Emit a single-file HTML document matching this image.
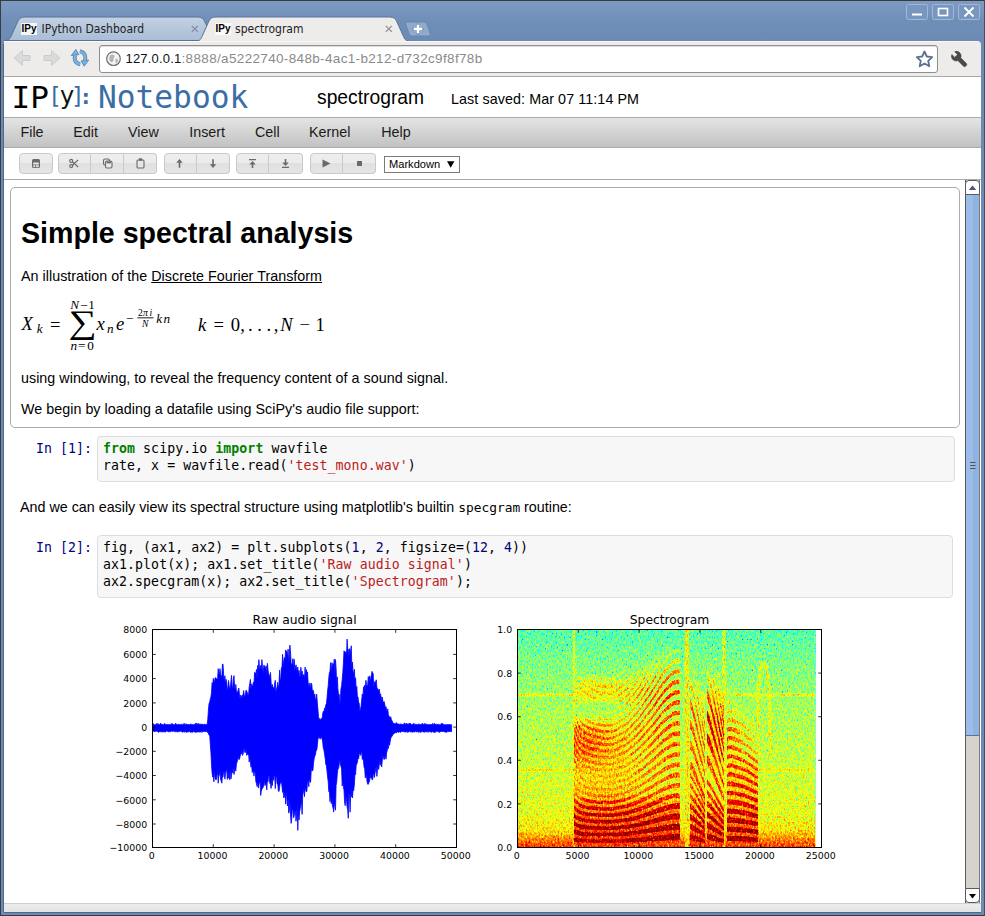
<!DOCTYPE html>
<html lang="en"><head><meta charset="utf-8"><title>spectrogram</title>
<style>
*{box-sizing:border-box;margin:0;padding:0}
html,body{width:985px;height:916px;overflow:hidden;background:#6d8cb6}
body{position:relative;font-family:"Liberation Sans",sans-serif;color:#000}
.abs{position:absolute}
#frame{position:absolute;left:0;top:0;width:985px;height:916px;background:linear-gradient(#7e9cc2 0px,#6f8eb8 20px,#6b8ab4 41px,#6b8ab4 100%);border:1px solid #3b3b3b;border-right-color:#3f4f6a}
#toolbar{position:absolute;left:4px;top:41px;width:977px;height:36px;border-radius:0 4px 0 0;background:#edecea;border-bottom:1px solid #a9a9a9;border-top:1px solid #f8f8f8}
#page{position:absolute;left:4px;top:77px;width:977px;height:826px;background:#fff;overflow:hidden}
#lshade{position:absolute;left:3px;top:44px;width:1px;height:868px;background:#4d668c}
#bstrip{position:absolute;left:4px;top:903px;width:977px;height:9.500px;background:linear-gradient(#ececec,#e4e4e4);border-top:1px solid #cfcfcf;border-bottom:1px solid #4d668c}
.tabtxt{position:absolute;font-family:"DejaVu Sans Condensed","Liberation Sans",sans-serif;font-size:12px;line-height:15px;color:#222;white-space:pre}
.ipy{position:absolute;font-family:"Liberation Sans",sans-serif;font-weight:bold;font-size:10px;color:#000;background:#f4f6f9;line-height:12px;height:12px;width:16px;text-align:center}
#url{position:absolute;left:99px;top:45px;width:838.500px;height:28px;background:#fff;border:1px solid #8e8e8e;border-radius:3px;box-shadow:inset 0 1px 1px #ddd}
#urltxt{position:absolute;left:125.500px;top:50.500px;font-size:13.500px;line-height:16px;color:#8a8a8a;white-space:pre;letter-spacing:0.34px}
#urltxt b{font-weight:normal;color:#111;font-size:13px;letter-spacing:0.2px}
#menubar{position:absolute;left:0;top:40px;width:977px;height:31px;background:linear-gradient(#e4e4e4,#c2c2c2);border-top:1px solid #aaa;border-bottom:1px solid #aaa}
#menubar span{position:absolute;top:6px;font-size:14.3px;line-height:17px;color:#1a1a1a}
#tb{position:absolute;left:0;top:71px;width:977px;height:32px;background:#fff;border-bottom:1px solid #aaa}
.btn{position:absolute;top:5px;height:20.500px;background:linear-gradient(#eeeeee 0,#ebebeb 48%,#e0e0e0 49%,#e5e5e5 100%);border:1px solid #c9c9c9}
.bl{border-radius:4px 0 0 4px}.br{border-radius:0 4px 4px 0;border-left:none}.bm{border-left:none}.bs{border-radius:4px}
h1.x{}.md{font-size:14.3px;line-height:17px;white-space:pre;position:absolute;color:#000;letter-spacing:0.03px}
.code{font-family:"DejaVu Sans Mono","Liberation Mono",monospace;font-size:13.2px;line-height:17px;white-space:pre;position:absolute;color:#000;letter-spacing:0.08px}
.k{color:#008000;font-weight:bold}.s{color:#ba2121}.n{color:#000080}
.inbox{position:absolute;background:#f7f7f7;border:1px solid #ddd;border-radius:4px}
.prompt{color:#000080}
</style></head><body>
<div id="frame"></div>

<svg class="abs" style="left:0;top:0" width="985" height="42" viewBox="0 0 985 42">
 <defs>
  <linearGradient id="tabi" x1="0" y1="0" x2="0" y2="1"><stop offset="0" stop-color="#c3d1e3"/><stop offset="1" stop-color="#aabdd6"/></linearGradient>
 </defs>
 <path d="M4 40.500 C8.500 40.500 10 39 11.500 35.500 L17.500 22 C19 18.500 21 17 25 17 L197.500 17 C201.500 17 203.500 18.500 205 22 L211 35.500 C212.500 39 214 40.500 218.500 40.500 Z" fill="url(#tabi)" stroke="#5a7396" stroke-width="1"/>
 <path d="M194.500 41.500 C199 41.500 200.500 40 202 36.500 L208.500 22 C210 18.500 212 17 216 17 L389.500 17 C393.500 17 395.500 18.500 397 22 L403.500 36.500 C405 40 406.500 41.500 411 41.500 Z" fill="#edecea" stroke="#5a7396" stroke-width="1"/>
 <rect x="196" y="41" width="214.500" height="1.500" fill="#edecea"/>
 <!-- new tab button -->
 <path d="M407.500 22 L423.500 22 C425.500 22 426.300 22.800 427 24.500 L430 33 C430.800 35.300 430 36 428 36 L412.500 36 C410.500 36 409.700 35.200 409 33.500 L406 25 C405.200 22.700 405.500 22 407.500 22 Z" fill="#91aacb" stroke="#6482ab" stroke-width="0.800"/>
 <path d="M418 25 v8.600 M413.700 29.300 h8.600" stroke="#5f7ba3" stroke-width="3.400" stroke-linecap="round" opacity="0.45"/>
 <path d="M418 24.700 v8.600 M413.700 29 h8.600" stroke="#fff" stroke-width="2.400"/>
 <!-- close x -->
 <path d="M191.800 25.900 l6 6 m0 -6 l-6 6" stroke="#7d8ea6" stroke-width="1.300" fill="none"/>
 <path d="M385.800 25.900 l6 6 m0 -6 l-6 6" stroke="#8f8f8f" stroke-width="1.300" fill="none"/>
</svg>

<svg class="abs" style="left:900px;top:0" width="85" height="24" viewBox="0 0 85 24">
 <g fill="#7796c0" stroke="#a3b8d6" stroke-width="1">
  <rect x="6.500" y="4.500" width="21" height="15" rx="2"/>
  <rect x="32.500" y="4.500" width="21" height="15" rx="2"/>
  <rect x="58.500" y="4.500" width="21" height="15" rx="2"/>
 </g>
 <path d="M12 14.500 h10" stroke="#fff" stroke-width="2"/>
 <rect x="38.500" y="8.500" width="9" height="7" fill="none" stroke="#fff" stroke-width="1.600"/>
 <path d="M64.500 7.500 l9 9 m0 -9 l-9 9" stroke="#fff" stroke-width="1.800"/>
</svg>
<span class="ipy" style="left:21px;top:23px">IPy</span><span class="tabtxt" style="left:41.500px;top:21.500px">IPython Dashboard</span>
<span class="ipy" style="left:215px;top:23px;background:#fbfbfb">IPy</span><span class="tabtxt" style="left:235px;top:21.500px">spectrogram</span>
<div id="toolbar"></div>

<svg class="abs" style="left:4px;top:42px" width="100" height="34" viewBox="0 0 100 34">
 <!-- back -->
 <path d="M10 16 L18.500 8.500 L18.500 13.500 L26 13.500 L26 18.500 L18.500 18.500 L18.500 23.500 Z" fill="#dadada" stroke="#c6c6c6" stroke-width="0.800"/>
 <!-- forward -->
 <path d="M56 16 L47.500 8.500 L47.500 13.500 L40 13.500 L40 18.500 L47.500 18.500 L47.500 23.500 Z" fill="#dadada" stroke="#c6c6c6" stroke-width="0.800"/>
 <!-- reload -->
 <g transform="translate(76,15.800) scale(0.87)">
  <g id="rl">
   <path d="M0.200 7.400 C-6 6.600 -7.200 0.500 -5.400 -3.200" stroke="#4f7fb2" stroke-width="4.400" fill="none"/>
   <path d="M-10 -2.600 L-1.300 -3.600 L-4.800 -9.600 Z" fill="#7fb0e0" stroke="#4f7fb2" stroke-width="1" stroke-linejoin="round"/>
   <path d="M0.200 7.400 C-6 6.600 -7.200 0.500 -5.400 -3.200" stroke="#7fb0e0" stroke-width="2.800" fill="none"/>
  </g>
  <g transform="rotate(180)">
   <path d="M0.200 7.400 C-6 6.600 -7.200 0.500 -5.400 -3.200" stroke="#4f7fb2" stroke-width="4.400" fill="none"/>
   <path d="M-10 -2.600 L-1.300 -3.600 L-4.800 -9.600 Z" fill="#7fb0e0" stroke="#4f7fb2" stroke-width="1" stroke-linejoin="round"/>
   <path d="M0.200 7.400 C-6 6.600 -7.200 0.500 -5.400 -3.200" stroke="#7fb0e0" stroke-width="2.800" fill="none"/>
  </g>
 </g>
</svg>
<div id="url"></div>

<svg class="abs" style="left:100px;top:46px" width="880" height="26" viewBox="0 0 880 26">
 <circle cx="13.500" cy="12.700" r="6.800" fill="#f4f4f4" stroke="#6e6e6e" stroke-width="1.200"/>
 <path d="M10 9.500 c2 -1.500 4 -1 4.500 0.500 c0.500 1.500 -1.500 2 -1 3.500 c0.500 1.500 -1 3 -2.500 2.500 c-1.500 -0.500 -2.500 -4 -1 -6.500z M15.500 13 c1.500 -0.500 3 0.500 2.500 2 c-0.500 1.500 -2 2.500 -2.500 1.500z" fill="#b5b5b5"/>
 <!-- star -->
 <path d="M824.500 5.500 l2.300 5 5.400 0.600 -4 3.700 1.100 5.400 -4.800 -2.700 -4.800 2.700 1.100 -5.400 -4 -3.700 5.400 -0.600z" fill="#fff" stroke="#5b7091" stroke-width="1.800" stroke-linejoin="round"/>
 <!-- wrench -->
 <g transform="translate(859.300,13.200) rotate(-45)">
  <path d="M-2 -8.500 L-2 -4.500 L2 -4.500 L2 -8.500 C4.500 -7.500 5.500 -5 4.500 -2.500 C4 -1.200 3 -0.500 2 0 L2 8 C2 10 -2 10 -2 8 L-2 0 C-3 -0.500 -4 -1.200 -4.500 -2.500 C-5.500 -5 -4.500 -7.500 -2 -8.500 Z" fill="#4a4a4a" stroke="#333" stroke-width="0.500"/>
 </g>
</svg>
<div id="urltxt"><b>127.0.0.1</b>:8888/a5222740-848b-4ac1-b212-d732c9f8f78b</div>
<div id="lshade"></div>
<div id="bstrip"></div>
<div id="page">

<div class="abs" style="left:7.500px;top:2px;height:36px;white-space:pre;font-family:'DejaVu Sans Mono','Liberation Mono',monospace;font-size:31px;line-height:36px;color:#000">IP</div>
<div class="abs" style="left:47.200px;top:4.600px;white-space:pre;font-family:'DejaVu Sans','Liberation Sans',sans-serif;font-size:23px;line-height:28px;color:#3a6ea5">[<span style="color:#111;font-size:24px;margin-left:-0.200px">y</span><span style="margin-left:-1.600px">]</span><span style="margin-left:0.200px;font-weight:bold;font-size:20px">:</span></div>
<div class="abs" style="left:94px;top:2px;white-space:pre;font-family:'DejaVu Sans Mono','Liberation Mono',monospace;font-size:31.200px;line-height:36px;color:#3a6ea5">Notebook</div>

<div class="abs" style="left:313px;top:10px;font-size:19.300px;line-height:22px;white-space:pre">spectrogram</div>
<div class="abs" style="left:447px;top:14px;font-size:14.300px;line-height:17px;white-space:pre;letter-spacing:0.090px">Last saved: Mar 07 11:14 PM</div>
<div id="menubar"><span style="left:16.5px">File</span><span style="left:69.3px">Edit</span><span style="left:124px">View</span><span style="left:185.3px">Insert</span><span style="left:251px">Cell</span><span style="left:305px">Kernel</span><span style="left:377.3px">Help</span></div>
<div id="tb"><div class="btn bs" style="left:15px;width:33.5px"></div><div class="btn bl" style="left:53.5px;width:33.0px"></div><div class="btn bm" style="left:86.5px;width:33.5px"></div><div class="btn br" style="left:120px;width:32.5px"></div><div class="btn bl" style="left:159.5px;width:33.0px"></div><div class="btn br" style="left:192.5px;width:33.0px"></div><div class="btn bl" style="left:232px;width:33px"></div><div class="btn br" style="left:265px;width:33.5px"></div><div class="btn bl" style="left:305.5px;width:33.0px"></div><div class="btn br" style="left:338.5px;width:33.0px"></div><svg class="abs" style="left:0;top:0" width="480" height="32" viewBox="0 0 480 32"><g transform="translate(32,15.5)"><rect x="-4" y="-4.500" width="8" height="9" rx="1.500" fill="#6a6a6a"/><rect x="-2.800" y="-1" width="5.600" height="2" fill="#e8e8e8"/><rect x="-2.800" y="1.700" width="2" height="2" fill="#ddd"/><rect x="0" y="1.700" width="2.800" height="2" fill="#ddd"/></g><g transform="translate(70,15.5)"><g fill="none" stroke="#6a6a6a" stroke-width="1.200"><circle cx="-2.800" cy="-2.600" r="1.500"/><circle cx="-2.800" cy="2.600" r="1.500"/><path d="M-1.600 -1.800 L4.200 3.600 M-1.600 1.800 L4.200 -3.600"/></g></g><g transform="translate(103.5,15.5)"><rect x="-4" y="-4.500" width="6" height="6" rx="1.500" fill="#e6e6e6" stroke="#6a6a6a" stroke-width="1.100"/><rect x="-2" y="-2.500" width="6.500" height="7" rx="1.500" fill="#e6e6e6" stroke="#6a6a6a" stroke-width="1.100"/><rect x="-1" y="-2" width="4.500" height="1.800" fill="#6a6a6a"/></g><g transform="translate(136.5,15.5)"><rect x="-3.500" y="-3.500" width="7" height="8" rx="1" fill="#e6e6e6" stroke="#6a6a6a" stroke-width="1.100"/><rect x="-1.700" y="-5.200" width="3.400" height="2.400" rx="0.600" fill="#6a6a6a"/></g><g transform="translate(175.5,15.5)"><path d="M0 -4.500 L3.200 -0.800 L0.800 -0.800 L0.800 4.200 L-0.800 4.200 L-0.800 -0.800 L-3.200 -0.800 Z" fill="#6a6a6a"/></g><g transform="translate(209,15.5)"><path d="M0 4.500 L3.200 0.800 L0.800 0.800 L0.800 -4.200 L-0.800 -4.200 L-0.800 0.800 L-3.200 0.800 Z" fill="#6a6a6a"/></g><g transform="translate(248.5,15.5)"><path d="M-3.500 -4.500 H3.500 V-3.300 H-3.500 Z M0 -2.500 L3.200 1 L0.800 1 L0.800 4.500 L-0.800 4.500 L-0.800 1 L-3.200 1 Z" fill="#6a6a6a"/></g><g transform="translate(281.5,15.5)"><path d="M-3.500 4.500 H3.500 V3.300 H-3.500 Z M0 2.500 L3.200 -1 L0.800 -1 L0.800 -4.500 L-0.800 -4.500 L-0.800 -1 L-3.200 -1 Z" fill="#6a6a6a"/></g><g transform="translate(322,15.5)"><path d="M-3.500 -4 L4.500 0 L-3.500 4 Z" fill="#6a6a6a"/></g><g transform="translate(355.5,15.5)"><rect x="-2.500" y="-2.500" width="5" height="5" fill="#6a6a6a"/></g></svg><div class="abs" style="left:380px;top:7.5px;width:76px;height:17.500px;border:1px solid #7a7a7a;background:#fff"></div><div class="abs" style="left:385px;top:9px;font-size:11.100px;line-height:14px;white-space:pre">Markdown</div><svg class="abs" style="left:441.5px;top:11.5px" width="10" height="10"><path d="M1 1.200 L8.400 1.200 L4.700 7.700 Z" fill="#000"/></svg></div>
<div class="abs" style="left:6px;top:110.30000000000001px;width:950px;height:241px;border:1px solid #ababab;border-radius:5px"></div>
<div class="md" style="left:17px;top:138.5px;font-size:28.600px;line-height:34px;font-weight:bold;letter-spacing:0">Simple spectral analysis</div>
<div class="md" style="left:17px;top:191px;">An illustration of the <span style="text-decoration:underline">Discrete Fourier Transform</span></div>
<svg class="abs" style="left:11px;top:215px" width="320" height="70" viewBox="0 0 320 70" font-family="Liberation Serif, DejaVu Serif, serif" fill="#000"><text x="6.5" y="38.3" font-size="18.6" font-style="italic" >X</text><text x="21.8" y="41.4" font-size="13.2" font-style="italic" >k</text><text x="35.0" y="38.8" font-size="18.6"  >=</text><text transform="translate(53.6,41.0) scale(1.36,1.13)" x="0" y="0" font-size="29">∑</text><text x="55.3" y="17.3" font-size="13.2" font-style="italic" >N</text><text x="65.3" y="17.5" font-size="13.2"  >−</text><text x="73.3" y="17.3" font-size="13.2"  >1</text><text x="55.4" y="57.8" font-size="13.2" font-style="italic" >n</text><text x="63.0" y="58.0" font-size="13.2"  >=</text><text x="72.2" y="57.8" font-size="13.2"  >0</text><text x="81.5" y="38.3" font-size="18.6" font-style="italic" >x</text><text x="92.0" y="41.4" font-size="13.2" font-style="italic" >n</text><text x="101.0" y="38.3" font-size="18.6" font-style="italic" >e</text><text x="111.0" y="30.5" font-size="13.2"  >−</text><text x="123.0" y="24.3" font-size="9.6"  >2</text><text x="128.0" y="24.3" font-size="9.6" font-style="italic" >π</text><text x="134.6" y="24.3" font-size="9.6" font-style="italic" >i</text><rect x="122.5" y="25.399999999999977" width="16" height="0.9" fill="#000"/><text x="127.0" y="35.2" font-size="9.6" font-style="italic" >N</text><text x="141.3" y="30.7" font-size="13.2" font-style="italic" >k</text><text x="148.5" y="30.7" font-size="13.2" font-style="italic" >n</text><text x="183.0" y="38.5" font-size="18.6" font-style="italic" >k</text><text x="198.5" y="38.8" font-size="18.6"  >=</text><text x="215.8" y="38.5" font-size="18.6"  >0</text><text x="225.3" y="38.5" font-size="18.6"  >,</text><text x="233.0" y="38.5" font-size="18.6"  >.</text><text x="242.2" y="38.5" font-size="18.6"  >.</text><text x="251.4" y="38.5" font-size="18.6"  >.</text><text x="258.8" y="38.5" font-size="18.6"  >,</text><text x="265.3" y="38.5" font-size="18.6" font-style="italic" >N</text><text x="284.5" y="38.8" font-size="18.6"  >−</text><text x="300.5" y="38.5" font-size="18.6"  >1</text></svg>
<div class="md" style="left:17px;top:293px;">using windowing, to reveal the frequency content of a sound signal.</div>
<div class="md" style="left:17px;top:324px;">We begin by loading a datafile using SciPy's audio file support:</div>
<div class="inbox" style="left:93px;top:359px;width:858px;height:46px"></div>
<div class="code prompt" style="left:32px;top:363px;">In [1]:</div>
<div class="code" style="left:99px;top:363px;"><span class="k">from</span> scipy.io <span class="k">import</span> wavfile
rate, x = wavfile.read(<span class="s">'test_mono.wav'</span>)</div>
<div class="md" style="left:16px;top:422px;letter-spacing:0">And we can easily view its spectral structure using matplotlib's builtin <span style="font-family:'DejaVu Sans Mono','Liberation Mono',monospace;font-size:12.870px">specgram</span> routine:</div>
<div class="inbox" style="left:93px;top:458px;width:856px;height:63px"></div>
<div class="code prompt" style="left:32px;top:462px;">In [2]:</div>
<div class="code" style="left:99px;top:462px;">fig, (ax1, ax2) = plt.subplots(<span class="n">1</span>, <span class="n">2</span>, figsize=(<span class="n">12</span>, <span class="n">4</span>))
ax1.plot(x); ax1.set_title(<span class="s">'Raw audio signal'</span>)
ax2.specgram(x); ax2.set_title(<span class="s">'Spectrogram'</span>);</div>
<svg class="abs" style="left:96px;top:531px" width="760" height="262" viewBox="0 0 760 262" font-family="DejaVu Sans, Liberation Sans, sans-serif" font-size="9.4" fill="#000"><defs>
<linearGradient id="sbg" x1="0" y1="0" x2="0" y2="1"><stop offset="0.00" stop-color="#757575"/><stop offset="0.15" stop-color="#818181"/><stop offset="0.40" stop-color="#8c8c8c"/><stop offset="0.65" stop-color="#949494"/><stop offset="0.85" stop-color="#9c9c9c"/><stop offset="0.92" stop-color="#a6a6a6"/><stop offset="0.96" stop-color="#bdbdbd"/><stop offset="1.00" stop-color="#d6d6d6"/></linearGradient>
<filter id="jet" x="0" y="0" width="1" height="1" filterUnits="objectBoundingBox" color-interpolation-filters="sRGB">
 <feTurbulence type="fractalNoise" baseFrequency="0.62 0.36" numOctaves="2" seed="5" result="n"/>
 <feColorMatrix in="n" type="matrix" values="0.6 0.6 0 0 0  0.6 0.6 0 0 0  0.6 0.6 0 0 0  0 0 0 0 1" result="ng"/>
 <feComposite in="SourceGraphic" in2="ng" operator="arithmetic" k1="0" k2="1" k3="0.42" k4="-0.25" result="s0"/>
 <feTurbulence type="fractalNoise" baseFrequency="0.8 0.55" numOctaves="1" seed="23" result="n2"/>
 <feColorMatrix in="n2" type="matrix" values="1 0 0 0 0  1 0 0 0 0  1 0 0 0 0  0 0 0 0 1" result="n2g"/>
 <feComponentTransfer in="n2g" result="sp"><feFuncR type="table" tableValues="0 0 0 0.7 1 1 1 1 1 1 1"/><feFuncG type="table" tableValues="0 0 0 0.7 1 1 1 1 1 1 1"/><feFuncB type="table" tableValues="0 0 0 0.7 1 1 1 1 1 1 1"/></feComponentTransfer>
 <feComposite in="s0" in2="sp" operator="arithmetic" k1="0" k2="1" k3="0.2" k4="-0.2" result="s"/>
 <feComponentTransfer in="s">
  <feFuncR type="table" tableValues="0 0 0 0 0.5 1 1 1 0.5"/><feFuncG type="table" tableValues="0 0 0.5 1 1 1 0.5 0 0"/><feFuncB type="table" tableValues="0.5 1 1 1 0.5 0 0 0 0"/><feFuncA type="linear" slope="0" intercept="1"/>
 </feComponentTransfer>
</filter>
</defs><path d="M52.5 116.4 53.1 115.5 53.7 116.6 54.3 116.7 54.9 116.9 55.5 116.6 56.1 116.6 56.8 115.4 57.4 116.4 58 115.4 58.6 116.7 59.2 116.8 59.8 116.5 60.4 115.4 61 115.4 61.6 116.8 62.2 116.4 62.8 116.5 63.4 116.8 64.1 116.2 64.7 115.4 65.3 116.8 65.9 116.4 66.5 116.6 67.1 116.8 67.7 116.3 68.3 116.5 68.9 116.7 69.5 116.6 70.1 116.5 70.7 116.3 71.3 116.5 72 115.3 72.6 116.5 73.2 116.4 73.8 116.7 74.4 116.7 75 116.4 75.6 115.3 76.2 116.3 76.8 116.4 77.4 116.4 78 116.6 78.6 116.4 79.3 116.4 79.9 116.6 80.5 116.4 81.1 116.7 81.7 116.2 82.3 116.6 82.9 116.4 83.5 116.4 84.1 115.2 84.7 116.4 85.3 116.4 85.9 116.1 86.5 116.1 87.2 116.5 87.8 116.4 88.4 116.5 89 116.7 89.6 116.5 90.2 116.1 90.8 116.3 91.4 116.4 92 116.2 92.6 116.7 93.2 116.7 93.8 116.6 94.5 116.3 95.1 116.6 95.7 115.2 96.3 115.2 96.9 116.3 97.5 116.5 98.1 115.2 98.7 116.1 99.3 116.2 99.9 116.2 100.5 116.2 101.1 116.1 101.7 116.3 102.4 116.3 103 116.5 103.6 116.5 104.2 116.3 104.8 116.3 105.4 116.5 106 116.6 106.6 116.4 107.2 116.5 107.8 111.1 108.4 102.3 109 95.7 109.7 94.1 110.3 90.9 110.9 89.1 111.5 84.4 112.1 74.6 112.7 78.3 113.3 70.4 113.9 71.9 114.5 75.6 115.1 69.6 115.7 70.1 116.3 70.3 116.9 71.3 117.6 70.4 118.2 60.6 118.8 65.7 119.4 66.1 120 60.7 120.6 66.9 121.2 67.6 121.8 70.3 122.4 56.2 123 56 123.6 65.8 124.2 74.3 124.9 67.8 125.5 76.5 126.1 71.3 126.7 75.1 127.3 80.9 127.9 81.4 128.5 72.5 129.1 77.3 129.7 79.7 130.3 81.3 130.9 73.4 131.5 67.4 132.1 79.2 132.8 79.2 133.4 71 134 67.6 134.6 79.3 135.2 81.8 135.8 76.4 136.4 82.5 137 85.1 137.6 84.1 138.2 82.1 138.8 80 139.4 85.9 140.1 91.2 140.7 87 141.3 88.3 141.9 89.8 142.5 86.9 143.1 86.7 143.7 82.6 144.3 87.9 144.9 88.4 145.5 85.5 146.1 82.2 146.7 83.1 147.3 84.5 148 86.9 148.6 86.6 149.2 79 149.8 75.4 150.4 71.4 151 82 151.6 75.9 152.2 78.1 152.8 77.9 153.4 73.9 154 75.7 154.6 64.3 155.3 66 155.9 64.8 156.5 61.4 157.1 70.6 157.7 57.4 158.3 65 158.9 51.6 159.5 60 160.1 60.8 160.7 57.5 161.3 62.3 161.9 51.6 162.5 59.4 163.2 65.3 163.8 57.2 164.4 57.6 165 59.9 165.6 60.2 166.2 57.8 166.8 69.3 167.4 55.3 168 61.6 168.6 66.6 169.2 66.5 169.8 70.8 170.5 64.4 171.1 74.5 171.7 80.5 172.3 76.4 172.9 79.5 173.5 79.4 174.1 81.4 174.7 75 175.3 72.3 175.9 84.4 176.5 81.5 177.1 78.9 177.7 74.3 178.4 80.1 179 76.2 179.6 62.2 180.2 73.6 180.8 70.3 181.4 59.6 182 58.7 182.6 46.3 183.2 58.6 183.8 52.6 184.4 49.5 185 51.9 185.7 41.9 186.3 44.2 186.9 43.3 187.5 49.6 188.1 41 188.7 55.2 189.3 47.8 189.9 37.1 190.5 43.9 191.1 54.7 191.7 57.8 192.3 55.8 192.9 50.6 193.6 60.2 194.2 51.3 194.8 62.8 195.4 60.1 196 56.8 196.6 61.1 197.2 63.8 197.8 59 198.4 67.7 199 62.2 199.6 69.1 200.2 68.8 200.9 59.3 201.5 67.1 202.1 63 202.7 69.3 203.3 67 203.9 66.4 204.5 72.4 205.1 59.1 205.7 70.1 206.3 61.5 206.9 66 207.5 63.9 208.1 74.2 208.8 78.9 209.4 76.6 210 74.9 210.6 82.6 211.2 75.2 211.8 76.1 212.4 83.9 213 82 213.6 83.4 214.2 89.1 214.8 86 215.4 91.7 216.1 91.2 216.7 86.2 217.3 94.4 217.9 101 218.5 108.7 219.1 112.5 219.7 110.3 220.3 111.4 220.9 112.1 221.5 110.2 222.1 111.1 222.7 105.8 223.3 103.2 224 104.1 224.6 99.9 225.2 101.8 225.8 96.8 226.4 95.7 227 90.3 227.6 82.5 228.2 77.9 228.8 69.6 229.4 64.6 230 63.3 230.6 54.7 231.3 66.9 231.9 54.7 232.5 60.9 233.1 55.6 233.7 57.2 234.3 51.1 234.9 67.9 235.5 51.6 236.1 60.5 236.7 77.6 237.3 68.9 237.9 80.6 238.5 86.9 239.2 86.2 239.8 98.3 240.4 89.8 241 80.6 241.6 77.8 242.2 71.4 242.8 64.7 243.4 55.3 244 42.8 244.6 44.1 245.2 45.3 245.8 43.6 246.5 47.9 247.1 31.1 247.7 40.5 248.3 41.3 248.9 50 249.5 40.7 250.1 47.1 250.7 41.9 251.3 37.8 251.9 60.6 252.5 54.1 253.1 66.1 253.7 64.1 254.4 61.3 255 74.1 255.6 69.8 256.2 82.1 256.8 78.5 257.4 88.4 258 88.8 258.6 94.3 259.2 95.3 259.8 103.4 260.4 101.2 261 98.7 261.7 92 262.3 85.9 262.9 91.5 263.5 78.8 264.1 82.7 264.7 77.1 265.3 80.6 265.9 72.3 266.5 76.3 267.1 78.3 267.7 76.7 268.3 68.6 268.9 75.9 269.6 67.9 270.2 73.8 270.8 70 271.4 67 272 63.4 272.6 64.6 273.2 65.8 273.8 80.2 274.4 73.6 275 74.4 275.6 74.6 276.2 71.8 276.9 79.4 277.5 80.3 278.1 82.5 278.7 82.1 279.3 81.1 279.9 86.2 280.5 85.9 281.1 88.4 281.7 93.1 282.3 89 282.9 93.3 283.5 94.5 284.1 93.5 284.8 96.2 285.4 100.4 286 98.7 286.6 102 287.2 104 287.8 100.9 288.4 107.4 289 107.7 289.6 108.9 290.2 110.4 290.8 108.8 291.4 112.3 292.1 112.6 292.7 114.5 293.3 115.1 293.9 115.3 294.5 115.6 295.1 116 295.7 116 296.3 114.5 296.9 115.7 297.5 115.8 298.1 116.3 298.7 115.7 299.3 116.4 300 116.4 300.6 116 301.2 116.1 301.8 116.3 302.4 116.5 303 116.6 303.6 116.6 304.2 115.1 304.8 115.1 305.4 116.3 306 116.4 306.6 115.1 307.3 116.1 307.9 116.4 308.5 116.6 309.1 115.1 309.7 116.6 310.3 115.2 310.9 116.7 311.5 116 312.1 116.6 312.7 116.2 313.3 116.2 313.9 115.2 314.5 116.7 315.2 116.4 315.8 116.3 316.4 116.3 317 116.7 317.6 116.6 318.2 116.2 318.8 116.2 319.4 116.3 320 116.2 320.6 116.5 321.2 116.2 321.8 116.5 322.5 115.2 323.1 116.7 323.7 116.2 324.3 116.2 324.9 115.3 325.5 116.5 326.1 116.4 326.7 116.3 327.3 116.4 327.9 116.3 328.5 116.7 329.1 116.6 329.7 116.4 330.4 116.6 331 116.5 331.6 116.5 332.2 116.4 332.8 115.3 333.4 116.8 334 116.7 334.6 115.3 335.2 116.3 335.8 116.5 336.4 116.4 337 116.3 337.7 116.5 338.3 116.3 338.9 116.4 339.5 116.7 340.1 116.7 340.7 116.7 341.3 115.4 341.9 116.3 342.5 115.4 343.1 116.3 343.7 116.3 344.3 116.8 344.9 116.8 345.6 116.4 346.2 116.4 346.8 116.9 347.4 116.6 348 116.5 348.6 116.6 349.2 116.5 349.8 116.6 350.4 116.7 351 116.6 351.6 116.8 351.6 123.3 351 124.1 350.4 123.1 349.8 123.2 349.2 123.8 348.6 123.9 348 123.3 347.4 123.6 346.8 124.4 346.2 124.1 345.6 124.1 344.9 123.9 344.3 124 343.7 123.4 343.1 123.2 342.5 123.3 341.9 124 341.3 123.3 340.7 123.7 340.1 123.4 339.5 124.4 338.9 124.1 338.3 123.8 337.7 123.4 337 123.3 336.4 123.1 335.8 124.4 335.2 123.2 334.6 124.4 334 124.1 333.4 124.4 332.8 123.6 332.2 123.3 331.6 124.4 331 123.8 330.4 124 329.7 123.6 329.1 123.5 328.5 123.8 327.9 124.4 327.3 123.4 326.7 123.9 326.1 123.6 325.5 124 324.9 123.2 324.3 124.4 323.7 124 323.1 124 322.5 123.4 321.8 123.5 321.2 124.2 320.6 124.5 320 123.4 319.4 124 318.8 124.5 318.2 123.8 317.6 123.7 317 124.1 316.4 123.8 315.8 123.4 315.2 123.5 314.5 124 313.9 123.9 313.3 123.7 312.7 123.9 312.1 124.5 311.5 123.2 310.9 124 310.3 123.8 309.7 123.4 309.1 123.8 308.5 124 307.9 123.5 307.3 124.5 306.6 123.7 306 123.6 305.4 124 304.8 124.1 304.2 123.7 303.6 123.4 303 123.8 302.4 123.4 301.8 123.4 301.2 123.6 300.6 124.4 300 123.7 299.3 123.9 298.7 124.3 298.1 124.4 297.5 123.7 296.9 124 296.3 124.9 295.7 124.5 295.1 125 294.5 124.8 293.9 126 293.3 125.7 292.7 127.2 292.1 128.1 291.4 129.3 290.8 129.9 290.2 133.2 289.6 137.3 289 134.7 288.4 140.5 287.8 139 287.2 142.7 286.6 144.9 286 151.2 285.4 146.6 284.8 149.9 284.1 151.6 283.5 150.1 282.9 147.6 282.3 152.1 281.7 159 281.1 154.4 280.5 157.2 279.9 151.8 279.3 156 278.7 161.5 278.1 158.3 277.5 161.2 276.9 168.4 276.2 157.5 275.6 161.9 275 165.4 274.4 169.5 273.8 164 273.2 167.4 272.6 171.7 272 171.7 271.4 169.1 270.8 170.2 270.2 166 269.6 173.3 268.9 174.5 268.3 176.3 267.7 176.2 267.1 174.1 266.5 167.5 265.9 167.8 265.3 170 264.7 160.8 264.1 159.4 263.5 153.4 262.9 149.8 262.3 151.5 261.7 144.4 261 145.1 260.4 147.4 259.8 144 259.2 146.4 258.6 151 258 149.9 257.4 154.3 256.8 156 256.2 157.2 255.6 166.6 255 165.4 254.4 175.9 253.7 182.7 253.1 180.5 252.5 189.9 251.9 180.9 251.3 189.1 250.7 184.6 250.1 204.2 249.5 187.4 248.9 186.1 248.3 210.3 247.7 201.9 247.1 199.1 246.5 191.8 245.8 187.9 245.2 197.7 244.6 194 244 182.3 243.4 179 242.8 172.8 242.2 178 241.6 161 241 158.5 240.4 156 239.8 151.3 239.2 156.5 238.5 160.7 237.9 161.1 237.3 165.8 236.7 174.3 236.1 177.2 235.5 202.2 234.9 198.8 234.3 193.6 233.7 204.1 233.1 199.9 232.5 198.5 231.9 189.8 231.3 195.7 230.6 187.4 230 193.7 229.4 182.9 228.8 183.6 228.2 173.5 227.6 169.1 227 162.9 226.4 157.6 225.8 156.5 225.2 150.5 224.6 146.6 224 142.3 223.3 140.3 222.7 134 222.1 131 221.5 129.3 220.9 129.3 220.3 131.1 219.7 130.4 219.1 128.7 218.5 129.2 217.9 131.5 217.3 137.9 216.7 142.2 216.1 142.2 215.4 147.3 214.8 147.8 214.2 150.4 213.6 154.6 213 161.8 212.4 163.1 211.8 160.3 211.2 163.3 210.6 174.3 210 174.1 209.4 169.7 208.8 178.7 208.1 172.9 207.5 172.9 206.9 183.2 206.3 183.9 205.7 181.7 205.1 178.6 204.5 188.6 203.9 181 203.3 184 202.7 187.8 202.1 206.4 201.5 192 200.9 196.6 200.2 200.5 199.6 204.1 199 212 198.4 201.7 197.8 222.4 197.2 196.1 196.6 208.3 196 213.3 195.4 203.4 194.8 203.7 194.2 207.9 193.6 209.8 192.9 199.9 192.3 202 191.7 210.7 191.1 215.4 190.5 206.3 189.9 191.7 189.3 203.5 188.7 205.1 188.1 189.8 187.5 198 186.9 191.7 186.3 181.8 185.7 196.2 185 184.5 184.4 188 183.8 190 183.2 182.7 182.6 184.4 182 178.8 181.4 171.6 180.8 175.4 180.2 174.4 179.6 179.5 179 183.6 178.4 183.1 177.7 175.6 177.1 175.9 176.5 167.1 175.9 169.5 175.3 180.6 174.7 168.1 174.1 167.2 173.5 172.3 172.9 169.5 172.3 177.6 171.7 170.7 171.1 180.5 170.5 175.2 169.8 175.5 169.2 167.9 168.6 166.8 168 173.8 167.4 170.9 166.8 181.9 166.2 174.4 165.6 176.1 165 177.6 164.4 172.3 163.8 177.4 163.2 179 162.5 180.5 161.9 180.9 161.3 183.2 160.7 187.5 160.1 174.4 159.5 173.9 158.9 176.5 158.3 180 157.7 173.2 157.1 178.5 156.5 175.6 155.9 173.9 155.3 165.8 154.6 162.1 154 168.1 153.4 162.9 152.8 163.2 152.2 164.5 151.6 155.3 151 159.2 150.4 153.7 149.8 148.2 149.2 154.1 148.6 145.7 148 146.7 147.3 145.8 146.7 147.4 146.1 141.4 145.5 144.3 144.9 144.8 144.3 141.5 143.7 140.7 143.1 146 142.5 147.4 141.9 142.1 141.3 146 140.7 145.9 140.1 148.6 139.4 151.4 138.8 151.3 138.2 149.3 137.6 152.2 137 154.2 136.4 156.5 135.8 163.1 135.2 159 134.6 163 134 166.5 133.4 158.4 132.8 165 132.1 160.9 131.5 167.8 130.9 171 130.3 158.9 129.7 171.9 129.1 162.6 128.5 170.2 127.9 161.9 127.3 171.4 126.7 161 126.1 162.5 125.5 165.5 124.9 171.1 124.2 164.3 123.6 163.4 123 169.2 122.4 168.6 121.8 175.2 121.2 173 120.6 171.4 120 163.5 119.4 167.2 118.8 167.5 118.2 175.2 117.6 163.5 116.9 167.5 116.3 171.7 115.7 171.7 115.1 170.3 114.5 160.8 113.9 173.8 113.3 167.9 112.7 169.1 112.1 165.2 111.5 156.5 110.9 144.2 110.3 136.3 109.7 126.9 109 127.2 108.4 125.5 107.8 124.8 107.2 123.9 106.6 123.3 106 123.4 105.4 124.1 104.8 123.3 104.2 123.4 103.6 123.5 103 124.1 102.4 123.8 101.7 123.2 101.1 124.5 100.5 123.4 99.9 124.1 99.3 123.9 98.7 124 98.1 123.7 97.5 124 96.9 123.8 96.3 124.4 95.7 124.1 95.1 124.4 94.5 123.9 93.8 123.6 93.2 123.7 92.6 124.2 92 124.4 91.4 123.9 90.8 124 90.2 124.4 89.6 123.2 89 123.7 88.4 123.8 87.8 124 87.2 124 86.5 124.4 85.9 123.3 85.3 124.1 84.7 124.3 84.1 123.1 83.5 123.9 82.9 124.1 82.3 124.3 81.7 123.4 81.1 123.3 80.5 123.2 79.9 123.8 79.3 123.3 78.6 123.7 78 124.1 77.4 123.8 76.8 123.5 76.2 123.8 75.6 123.8 75 123.4 74.4 123.6 73.8 123.1 73.2 123.3 72.6 123.4 72 123.5 71.3 123 70.7 123 70.1 124 69.5 123.7 68.9 123.4 68.3 123.9 67.7 123.6 67.1 123.1 66.5 123 65.9 123.4 65.3 124.2 64.7 123 64.1 124.2 63.4 123.7 62.8 124 62.2 123.5 61.6 124.2 61 123.6 60.4 123.8 59.8 123 59.2 124 58.6 124.2 58 124.2 57.4 123.4 56.8 122.9 56.1 123.6 55.5 123.3 54.9 123.4 54.3 123.8 53.7 122.9 53.1 123.3 52.5 124.1Z" fill="#0000ff" stroke="#0000ff" stroke-width="0.8" stroke-linejoin="round"/><clipPath id="sclip"><rect x="417.5" y="21.5" width="298.2" height="218"/></clipPath><g filter="url(#jet)" clip-path="url(#sclip)"><rect x="417.5" y="21.5" width="298.2" height="218" fill="url(#sbg)"/><rect x="417.5" y="85.4" width="298.2" height="3" fill="#a1a1a1" opacity="0.9"/><rect x="417.5" y="160.6" width="298.2" height="3" fill="#a4a4a4" opacity="0.9"/><path d="M657.7 152.3 L658.3 82.5 Q660.1 54.2 664.3 54.2 Q669.8 60.7 670.4 147.9" fill="#8f8f8f" fill-opacity="0.4" stroke="#a8a8a8" stroke-width="3.5" stroke-opacity="0.55"/><rect x="472.9" y="21.5" width="2.2" height="218" fill="#a8a8a8" opacity="0.7"/><rect x="584.9" y="21.5" width="4.2" height="218" fill="#a6a6a6" opacity="0.9"/><rect x="622.5" y="21.5" width="3.0" height="218" fill="#a3a3a3" opacity="0.85"/><clipPath id="sc1"><rect x="474" y="21.5" width="105.8" height="218"/></clipPath><g clip-path="url(#sc1)" fill="none" stroke-linejoin="round"><path d="M565.9 42.4 569 38.4" stroke="#7a7a7a" stroke-width="6.5"/><path d="M575.2 43.2 578.3 42.8 581.4 42.3" stroke="#7a7a7a" stroke-width="11"/><path d="M540.9 60.6 544.1 54.8" stroke="#808080" stroke-width="4"/><path d="M550.3 60.3 553.4 54.6 556.5 48.8 559.6 42.9M547.2 57.3 550.3 51.8M547.2 49 550.3 43.3" stroke="#808080" stroke-width="4.5"/><path d="M556.5 57.9 559.6 52.3 562.7 46.7" stroke="#808080" stroke-width="5"/><path d="M562.7 46.7 565.9 42.4" stroke="#808080" stroke-width="6"/><path d="M562.7 56.3 565.9 52.2" stroke="#808080" stroke-width="6.5"/><path d="M565.9 52.2 569 48.4 572.1 44.8" stroke="#808080" stroke-width="7"/><path d="M569 58.5 572.1 55" stroke="#808080" stroke-width="7.5"/><path d="M572.1 55 575.2 53.5M572.1 44.8 575.2 43.2" stroke="#808080" stroke-width="10"/><path d="M575.2 53.5 578.3 53.1 581.4 52.7" stroke="#808080" stroke-width="11"/><path d="M472.5 100 475.6 108.9" stroke="#858585" stroke-width="3"/><path d="M528.5 65.4 531.6 60.5" stroke="#858585" stroke-width="4"/><path d="M550.3 68.8 553.4 63.4 556.5 57.9M544.1 70.9 547.2 65.6 550.3 60.3M540.9 68.4 544.1 62.8 547.2 57.3M534.7 70.3 537.8 65.8 540.9 60.6M531.6 67.7 534.7 63 537.8 58.3" stroke="#858585" stroke-width="4.5"/><path d="M553.4 72.2 556.5 66.9 559.6 61.6 562.7 56.3M525.4 69 528.5 65.4" stroke="#858585" stroke-width="5"/><path d="M559.6 71 562.7 66" stroke="#858585" stroke-width="5.5"/><path d="M512.9 104.1 516 102.1M519.2 67 522.3 64.6 525.4 62.2" stroke="#858585" stroke-width="6"/><path d="M562.7 66 565.9 62.1M484.9 104.1 488 106.2 491.1 108" stroke="#858585" stroke-width="6.5"/><path d="M565.9 62.1 569 58.5M491.1 101.4 494.3 102.2M500.5 103.9 503.6 104.4 506.7 104.4 509.8 104.4" stroke="#858585" stroke-width="7"/><path d="M565.9 71.9 569 68.5 572.1 65.3" stroke="#858585" stroke-width="7.5"/><path d="M572.1 65.3 575.2 63.8" stroke="#858585" stroke-width="10"/><path d="M575.2 63.8 578.3 63.5 581.4 63.1" stroke="#858585" stroke-width="11"/><path d="M475.6 62.8 478.7 74.8" stroke="#8a8a8a" stroke-width="2"/><path d="M475.6 101.2 478.7 110.6" stroke="#8a8a8a" stroke-width="2.5"/><path d="M478.7 103.5 481.8 108.8" stroke="#8a8a8a" stroke-width="4"/><path d="M544.1 78.9 547.2 73.9M540.9 76.1 544.1 70.9M537.8 73.4 540.9 68.4M531.6 74.8 534.7 70.3M528.5 72.3 531.6 67.7" stroke="#8a8a8a" stroke-width="4.5"/><path d="M553.4 81 556.5 76M547.2 82.2 550.3 77.4 553.4 72.2M528.5 100.2 531.6 96.3M547.2 73.9 550.3 68.8M534.7 77.7 537.8 73.4" stroke="#8a8a8a" stroke-width="5"/><path d="M559.6 80.4 562.7 75.6M556.5 76 559.6 71M525.4 103.1 528.5 100.2M481.8 67.5 484.9 70.3" stroke="#8a8a8a" stroke-width="5.5"/><path d="M512.9 97.6 516 95.6M522.3 71.3 525.4 69M488 66.2 491.1 68.5M516 69.4 519.2 67" stroke="#8a8a8a" stroke-width="6"/><path d="M481.8 108.8 484.9 110.9M512.9 110.5 516 108.7 519.2 106.8 522.3 105 525.4 103.1M516 102.1 519.2 100.2 522.3 98.2 525.4 96.3" stroke="#8a8a8a" stroke-width="6.5"/><path d="M562.7 75.6 565.9 71.9M491.1 108 494.3 108.8 497.4 109.6 500.5 110.3M509.8 104.4 512.9 104.1M491.1 94.8 494.3 95.7" stroke="#8a8a8a" stroke-width="7"/><path d="M565.9 81.8 569 78.6" stroke="#8a8a8a" stroke-width="7.5"/><path d="M569 78.6 572.1 75.5" stroke="#8a8a8a" stroke-width="8"/><path d="M572.1 75.5 575.2 74.2" stroke="#8a8a8a" stroke-width="10"/><path d="M575.2 74.2 578.3 73.8 581.4 73.5" stroke="#8a8a8a" stroke-width="11"/><path d="M472.5 67.2 475.6 78.2" stroke="#8f8f8f" stroke-width="2.5"/><path d="M478.7 67.7 481.8 74.4" stroke="#8f8f8f" stroke-width="3.5"/><path d="M540.9 83.9 544.1 78.9M537.8 80.9 540.9 76.1M531.6 82 534.7 77.7M528.5 79.3 531.6 74.8" stroke="#8f8f8f" stroke-width="4.5"/><path d="M540.9 107.3 544.1 103M537.8 103.6 540.9 99.5 544.1 95 547.2 90.4 550.3 85.9 553.4 81M528.5 107.2 531.6 103.5 534.7 99.7M537.8 96 540.9 91.7 544.1 86.9 547.2 82.2M531.6 96.3 534.7 92.4 537.8 88.5M534.7 85 537.8 80.9M525.4 75.8 528.5 72.3" stroke="#8f8f8f" stroke-width="5"/><path d="M544.1 111 547.2 107 550.3 103 553.4 98.7 556.5 94.2 559.6 89.7M537.8 111.1 540.9 107.3M544.1 103 547.2 98.7 550.3 94.4 553.4 89.9 556.5 85.1 559.6 80.4M531.6 110.6 534.7 107.1 537.8 103.6M534.7 99.7 537.8 96M525.4 96.3 528.5 93.2" stroke="#8f8f8f" stroke-width="5.5"/><path d="M556.5 112.4 559.6 108.4M550.3 111.5 553.4 107.5 556.5 103.3 559.6 99.1 562.7 94.9M559.6 89.7 562.7 85.3M525.4 109.9 528.5 107.2M516 95.6 519.2 93.5M519.2 73.6 522.3 71.3M512.9 71.8 516 69.4" stroke="#8f8f8f" stroke-width="6"/><path d="M559.6 108.4 562.7 104.5M522.3 111.7 525.4 109.9M488 92.9 491.1 94.8M519.2 93.5 522.3 91.5" stroke="#8f8f8f" stroke-width="6.5"/><path d="M562.7 85.3 565.9 81.8M500.5 110.3 503.6 110.9 506.7 110.9 509.8 110.9 512.9 110.5M491.1 68.5 494.3 69.6 497.4 70.6 500.5 71.6" stroke="#8f8f8f" stroke-width="7"/><path d="M562.7 104.5 565.9 101.5M562.7 94.9 565.9 91.6" stroke="#8f8f8f" stroke-width="7.5"/><path d="M565.9 101.5 569 98.7M565.9 91.6 569 88.7 572.1 85.8" stroke="#8f8f8f" stroke-width="8"/><path d="M565.9 111.4 569 108.8 572.1 106.3M569 98.7 572.1 96" stroke="#8f8f8f" stroke-width="8.5"/><path d="M572.1 106.3 575.2 105.2M572.1 96 575.2 94.8M572.1 85.8 575.2 84.5" stroke="#8f8f8f" stroke-width="10.5"/><path d="M575.2 105.2 578.3 104.9 581.4 104.6M575.2 94.8 578.3 94.5 581.4 94.2M575.2 84.5 578.3 84.2 581.4 83.8" stroke="#8f8f8f" stroke-width="11"/><path d="M475.6 70.5 478.7 82" stroke="#949494" stroke-width="2"/><path d="M475.6 85.9 478.7 96.3" stroke="#949494" stroke-width="2.5"/><path d="M472.5 108.2 475.6 116.6" stroke="#949494" stroke-width="3"/><path d="M478.7 89.2 481.8 95" stroke="#949494" stroke-width="3.5"/><path d="M528.5 86.3 531.6 82" stroke="#949494" stroke-width="4.5"/><path d="M528.5 114.1 531.6 110.6M537.8 88.5 540.9 83.9M528.5 93.2 531.6 89.1 534.7 85" stroke="#949494" stroke-width="5"/><path d="M544.1 119 547.2 115.3M537.8 118.7 540.9 115 544.1 111M531.6 117.8 534.7 114.5 537.8 111.1M525.4 89.4 528.5 86.3M525.4 82.6 528.5 79.3" stroke="#949494" stroke-width="5.5"/><path d="M550.3 120 553.4 116.3 556.5 112.4M547.2 115.3 550.3 111.5M525.4 116.7 528.5 114.1M484.9 90.6 488 92.9M522.3 78 525.4 75.8M484.9 70.3 488 72.9M516 76 519.2 73.6" stroke="#949494" stroke-width="6"/><path d="M559.6 117.8 562.7 114.2M484.9 110.9 488 112.9M516 115.2 519.2 113.4 522.3 111.7M522.3 91.5 525.4 89.4" stroke="#949494" stroke-width="6.5"/><path d="M500.5 91 503.6 91.6 506.7 91.6 509.8 91.6 512.9 91.2M500.5 71.6 503.6 72.3 506.7 72.3 509.8 72.3 512.9 71.8" stroke="#949494" stroke-width="7"/><path d="M562.7 114.2 565.9 111.4" stroke="#949494" stroke-width="8"/><path d="M569 118.8 572.1 116.5" stroke="#949494" stroke-width="9"/><path d="M572.1 116.5 575.2 115.5" stroke="#949494" stroke-width="10.5"/><path d="M575.2 115.5 578.3 115.2 581.4 115" stroke="#949494" stroke-width="11"/><path d="M475.6 108.9 478.7 117.8M472.5 83.6 475.6 93.6M472.5 75.4 475.6 85.9" stroke="#999999" stroke-width="2.5"/><path d="M478.7 74.8 481.8 81.3" stroke="#999999" stroke-width="3.5"/><path d="M478.7 110.6 481.8 115.7" stroke="#999999" stroke-width="4"/><path d="M537.8 126.2 540.9 122.8 544.1 119M528.5 128.1 531.6 124.9 534.7 121.8M528.5 121.1 531.6 117.8" stroke="#999999" stroke-width="5.5"/><path d="M531.6 146.4 534.7 143.9M537.8 141.3 540.9 138.4 544.1 135.1 547.2 131.8M531.6 139.3 534.7 136.5 537.8 133.8 540.9 130.6 544.1 127.1 547.2 123.6 550.3 120M531.6 132.1 534.7 129.2 537.8 126.2M534.7 121.8 537.8 118.7M481.8 88.1 484.9 90.6M512.9 91.2 516 89 519.2 86.9 522.3 84.8 525.4 82.6M481.8 74.4 484.9 77.1M516 82.5 519.2 80.3 522.3 78M488 72.9 491.1 75.1M512.9 78.3 516 76" stroke="#999999" stroke-width="6"/><path d="M537.8 156.4 540.9 153.9 544.1 151.2 547.2 148.4M534.7 151.2 537.8 148.9 540.9 146.2 544.1 143.1 547.2 140.1 550.3 137.1 553.4 133.9 556.5 130.5M534.7 143.9 537.8 141.3M547.2 131.8 550.3 128.6 553.4 125.1 556.5 121.4 559.6 117.8M522.3 118.4 525.4 116.7M488 112.9 491.1 114.6M512.9 117 516 115.2" stroke="#999999" stroke-width="6.5"/><path d="M544.1 167.2 547.2 165M540.9 161.7 544.1 159.2 547.2 156.7 550.3 154.2 553.4 151.5M547.2 148.4 550.3 145.6 553.4 142.7 556.5 139.6 559.6 136.5M556.5 130.5 559.6 127.2 562.7 123.8M509.8 117.3 512.9 117M494.3 89.2 497.4 90.1 500.5 91M509.8 78.7 512.9 78.3" stroke="#999999" stroke-width="7"/><path d="M547.2 173.2 550.3 171.2M547.2 165 550.3 162.7 553.4 160.3 556.5 157.8M553.4 151.5 556.5 148.7 559.6 145.9 562.7 143.1M559.6 136.5 562.7 133.5" stroke="#999999" stroke-width="7.5"/><path d="M550.3 171.2 553.4 169.1 556.5 166.8 559.6 164.6M556.5 157.8 559.6 155.3 562.7 152.7M562.7 123.8 565.9 121.2" stroke="#999999" stroke-width="8"/><path d="M559.6 174 562.7 172M559.6 164.6 562.7 162.4M562.7 143.1 565.9 140.9M562.7 133.5 565.9 131.1M565.9 121.2 569 118.8" stroke="#999999" stroke-width="8.5"/><path d="M562.7 162.4 565.9 160.6M562.7 152.7 565.9 150.8M565.9 140.9 569 138.9M565.9 131.1 569 128.9 572.1 126.8" stroke="#999999" stroke-width="9"/><path d="M562.7 172 565.9 170.5M565.9 160.6 569 159.1M565.9 150.8 569 149 572.1 147.3M569 138.9 572.1 137" stroke="#999999" stroke-width="9.5"/><path d="M565.9 170.5 569 169.1 572.1 167.8M569 159.1 572.1 157.5" stroke="#999999" stroke-width="10"/><path d="M572.1 137 575.2 136.2M572.1 126.8 575.2 125.8" stroke="#999999" stroke-width="10.5"/><path d="M572.1 167.8 575.2 167.2 578.3 167 581.4 166.9M572.1 157.5 575.2 156.8 578.3 156.7 581.4 156.5M572.1 147.3 575.2 146.5 578.3 146.3 581.4 146.1M575.2 136.2 578.3 135.9 581.4 135.7M575.2 125.8 578.3 125.6 581.4 125.4" stroke="#999999" stroke-width="11"/><path d="M475.6 78.2 478.7 89.2" stroke="#9e9e9e" stroke-width="2"/><path d="M478.7 82 481.8 88.1" stroke="#9e9e9e" stroke-width="3.5"/><path d="M528.5 135 531.6 132.1" stroke="#9e9e9e" stroke-width="5.5"/><path d="M528.5 149 531.6 146.4M528.5 142 531.6 139.3M525.4 130.4 528.5 128.1M525.4 123.6 528.5 121.1M481.8 81.3 484.9 83.8M484.9 77.1 488 79.6 491.1 81.7M512.9 84.7 516 82.5" stroke="#9e9e9e" stroke-width="6"/><path d="M528.5 169.9 531.6 167.9M528.5 162.9 531.6 160.7 534.7 158.6M525.4 157.7 528.5 155.9 531.6 153.6 534.7 151.2M525.4 150.8 528.5 149M525.4 144 528.5 142M525.4 137.2 528.5 135M519.2 126.7 522.3 125.1M516 121.8 519.2 120.1 522.3 118.4" stroke="#9e9e9e" stroke-width="6.5"/><path d="M528.5 176.8 531.6 175.1 534.7 173.3 537.8 171.5 540.9 169.5 544.1 167.2M531.6 167.9 534.7 165.9 537.8 164 540.9 161.7M534.7 158.6 537.8 156.4M522.3 125.1 525.4 123.6M491.1 114.6 494.3 115.3 497.4 116.1 500.5 116.8 503.6 117.3 506.7 117.3 509.8 117.3M491.1 88.3 494.3 89.2M491.1 81.7 494.3 82.6 497.4 83.6 500.5 84.5 503.6 85.2 506.7 85.2 509.8 85.2 512.9 84.7M491.1 75.1 494.3 76.1 497.4 77.1 500.5 78.1 503.6 78.7 506.7 78.7 509.8 78.7" stroke="#9e9e9e" stroke-width="7"/><path d="M534.7 180.7 537.8 179.1 540.9 177.3 544.1 175.3 547.2 173.2" stroke="#9e9e9e" stroke-width="7.5"/><path d="M544.1 183.3 547.2 181.5 550.3 179.8 553.4 177.9" stroke="#9e9e9e" stroke-width="8"/><path d="M553.4 177.9 556.5 175.9 559.6 174" stroke="#9e9e9e" stroke-width="8.5"/><path d="M556.5 185 559.6 183.3 562.7 181.7" stroke="#9e9e9e" stroke-width="9"/><path d="M562.7 181.7 565.9 180.4" stroke="#9e9e9e" stroke-width="9.5"/><path d="M565.9 180.4 569 179.2" stroke="#9e9e9e" stroke-width="10"/><path d="M569 179.2 572.1 178" stroke="#9e9e9e" stroke-width="10.5"/><path d="M572.1 178 575.2 177.5 578.3 177.4 581.4 177.2" stroke="#9e9e9e" stroke-width="11"/><path d="M484.9 83.8 488 86.2 491.1 88.3" stroke="#a3a3a3" stroke-width="6"/><path d="M519.2 133.3 522.3 131.9M516 128.3 519.2 126.7M481.8 115.7 484.9 117.7M512.9 123.4 516 121.8" stroke="#a3a3a3" stroke-width="6.5"/><path d="M525.4 184.9 528.5 183.8 531.6 182.2 534.7 180.7M525.4 178.1 528.5 176.8M519.2 173.2 522.3 172.2M525.4 171.3 528.5 169.9M519.2 166.5 522.3 165.5 525.4 164.5 528.5 162.9M519.2 159.9 522.3 158.8 525.4 157.7M519.2 153.3 522.3 152 525.4 150.8M519.2 146.6 522.3 145.3 525.4 144M519.2 140 522.3 138.6 525.4 137.2M522.3 131.9 525.4 130.4M509.8 123.7 512.9 123.4" stroke="#a3a3a3" stroke-width="7"/><path d="M537.8 186.6 540.9 185 544.1 183.3M522.3 179 525.4 178.1M522.3 172.2 525.4 171.3" stroke="#a3a3a3" stroke-width="7.5"/><path d="M550.3 188.3 553.4 186.7 556.5 185" stroke="#a3a3a3" stroke-width="8.5"/><path d="M572.1 188.3 575.2 187.8 578.3 187.7 581.4 187.6" stroke="#a3a3a3" stroke-width="11"/><path d="M475.6 162.7 478.7 167.9" stroke="#a8a8a8" stroke-width="4"/><path d="M475.6 170.4 478.7 175.1M472.5 157.5 475.6 162.7" stroke="#a8a8a8" stroke-width="4.5"/><path d="M472.5 173.9 475.6 178M472.5 165.7 475.6 170.4" stroke="#a8a8a8" stroke-width="5"/><path d="M478.7 160.7 481.8 163.8" stroke="#a8a8a8" stroke-width="5.5"/><path d="M478.7 175.1 481.8 177.6M478.7 167.9 481.8 170.7" stroke="#a8a8a8" stroke-width="6"/><path d="M512.9 149.2 516 147.9M512.9 142.8 516 141.4 519.2 140M512.9 136.3 516 134.8 519.2 133.3M512.9 129.9 516 128.3M484.9 117.7 488 119.5" stroke="#a8a8a8" stroke-width="6.5"/><path d="M484.9 178.6 488 179.5M503.6 181.6 506.7 181.6 509.8 181.6 512.9 181.5 516 180.6 519.2 179.8 522.3 179M481.8 170.7 484.9 171.8 488 172.9 491.1 173.7M497.4 174.5 500.5 174.9 503.6 175.2 506.7 175.2 509.8 175.2 512.9 175 516 174.1 519.2 173.2M481.8 163.8 484.9 165 488 166.2 491.1 167.2M494.3 167.6 497.4 168 500.5 168.5 503.6 168.8 506.7 168.8 509.8 168.8 512.9 168.6 516 167.5 519.2 166.5M488 159.5 491.1 160.6M494.3 161.1 497.4 161.5 500.5 162 503.6 162.3 506.7 162.3 509.8 162.3 512.9 162.1 516 161 519.2 159.9M503.6 155.9 506.7 155.9 509.8 155.9 512.9 155.7 516 154.5 519.2 153.3M509.8 149.5 512.9 149.2M516 147.9 519.2 146.6M509.8 143 512.9 142.8M509.8 136.6 512.9 136.3M509.8 130.2 512.9 129.9M500.5 123.3 503.6 123.7 506.7 123.7 509.8 123.7" stroke="#a8a8a8" stroke-width="7"/><path d="M531.6 189.4 534.7 188 537.8 186.6M519.2 186.4 522.3 185.7 525.4 184.9M481.8 177.6 484.9 178.6M491.1 173.7 494.3 174.1 497.4 174.5M491.1 167.2 494.3 167.6M491.1 160.6 494.3 161.1" stroke="#a8a8a8" stroke-width="7.5"/><path d="M544.1 191.3 547.2 189.8" stroke="#a8a8a8" stroke-width="8"/><path d="M547.2 189.8 550.3 188.3" stroke="#a8a8a8" stroke-width="8.5"/><path d="M562.7 191.3 565.9 190.2 569 189.2" stroke="#a8a8a8" stroke-width="10"/><path d="M569 189.2 572.1 188.3" stroke="#a8a8a8" stroke-width="10.5"/><path d="M472.5 116.4 475.6 124.3M475.6 116.6 478.7 125" stroke="#adadad" stroke-width="3"/><path d="M475.6 155 478.7 160.7" stroke="#adadad" stroke-width="4"/><path d="M478.7 117.8 481.8 122.5" stroke="#adadad" stroke-width="4.5"/><path d="M475.6 178 478.7 182.2" stroke="#adadad" stroke-width="5"/><path d="M472.5 182.1 475.6 185.7 478.7 189.4M478.7 153.6 481.8 156.9" stroke="#adadad" stroke-width="5.5"/><path d="M478.7 189.4 481.8 191.3M478.7 182.2 481.8 184.5M488 119.5 491.1 121.1" stroke="#adadad" stroke-width="6.5"/><path d="M528.5 190.7 531.6 189.4M488 186.2 491.1 186.9M497.4 187.5 500.5 187.8 503.6 188.1 506.7 188.1 509.8 188.1 512.9 187.9 516 187.2 519.2 186.4M488 179.5 491.1 180.3M497.4 181 500.5 181.4 503.6 181.6M481.8 156.9 484.9 158.3 488 159.5M488 152.9 491.1 154M494.3 154.5 497.4 155 500.5 155.5 503.6 155.9M497.4 148.5 500.5 149.1 503.6 149.5 506.7 149.5 509.8 149.5M503.6 143 506.7 143 509.8 143M503.6 136.6 506.7 136.6 509.8 136.6M503.6 130.2 506.7 130.2 509.8 130.2M491.1 121.1 494.3 121.9 497.4 122.6 500.5 123.3" stroke="#adadad" stroke-width="7"/><path d="M537.8 194.2 540.9 192.8M519.2 193.1 522.3 192.4 525.4 191.8 528.5 190.7M481.8 184.5 484.9 185.4 488 186.2M491.1 186.9 494.3 187.2 497.4 187.5M491.1 180.3 494.3 180.7 497.4 181M491.1 154 494.3 154.5" stroke="#adadad" stroke-width="7.5"/><path d="M540.9 192.8 544.1 191.3" stroke="#adadad" stroke-width="8"/><path d="M556.5 194.1 559.6 192.7" stroke="#adadad" stroke-width="9"/><path d="M559.6 192.7 562.7 191.3" stroke="#adadad" stroke-width="9.5"/><path d="M475.6 147.3 478.7 153.6" stroke="#b2b2b2" stroke-width="3.5"/><path d="M472.5 149.3 475.6 155" stroke="#b2b2b2" stroke-width="4"/><path d="M478.7 146.4 481.8 150.1" stroke="#b2b2b2" stroke-width="5"/><path d="M472.5 190.3 475.6 193.4 478.7 196.5" stroke="#b2b2b2" stroke-width="6"/><path d="M481.8 122.5 484.9 124.4 488 126.2" stroke="#b2b2b2" stroke-width="6.5"/><path d="M478.7 196.5 481.8 198.2M497.4 194 500.5 194.3 503.6 194.5 506.7 194.5 509.8 194.5 512.9 194.4 516 193.7 519.2 193.1M481.8 150.1 484.9 151.5 488 152.9M491.1 147.4 494.3 148 497.4 148.5M497.4 142 500.5 142.6 503.6 143M497.4 135.5 500.5 136.2 503.6 136.6M494.3 128.4 497.4 129.1 500.5 129.7 503.6 130.2" stroke="#b2b2b2" stroke-width="7"/><path d="M528.5 197.7 531.6 196.5 534.7 195.4 537.8 194.2M481.8 191.3 484.9 192.1 488 192.8 491.1 193.5 494.3 193.7 497.4 194" stroke="#b2b2b2" stroke-width="7.5"/><path d="M547.2 198.1 550.3 196.8 553.4 195.5" stroke="#b2b2b2" stroke-width="8.5"/><path d="M553.4 195.5 556.5 194.1" stroke="#b2b2b2" stroke-width="9"/><path d="M475.6 132 478.7 139.3M475.6 124.3 478.7 132.1" stroke="#b8b8b8" stroke-width="3"/><path d="M472.5 132.9 475.6 139.6 478.7 146.4M472.5 124.6 475.6 132" stroke="#b8b8b8" stroke-width="3.5"/><path d="M472.5 141.1 475.6 147.3" stroke="#b8b8b8" stroke-width="4"/><path d="M478.7 132.1 481.8 136.3M478.7 125 481.8 129.4" stroke="#b8b8b8" stroke-width="4.5"/><path d="M478.7 139.3 481.8 143.2" stroke="#b8b8b8" stroke-width="5"/><path d="M472.5 198.5 475.6 201.1M481.8 136.3 484.9 138 488 139.5M481.8 129.4 484.9 131.2 488 132.9 491.1 134.3M488 126.2 491.1 127.7" stroke="#b8b8b8" stroke-width="6.5"/><path d="M500.5 200.8 503.6 200.9 506.7 200.9 509.8 200.9 512.9 200.8 516 200.3M481.8 143.2 484.9 144.7 488 146.2 491.1 147.4M488 139.5 491.1 140.9 494.3 141.5 497.4 142M491.1 134.3 494.3 134.9 497.4 135.5M491.1 127.7 494.3 128.4" stroke="#b8b8b8" stroke-width="7"/><path d="M481.8 198.2 484.9 198.9 488 199.5 491.1 200 494.3 200.3 497.4 200.5 500.5 200.8M516 200.3 519.2 199.7 522.3 199.1 525.4 198.6 528.5 197.7" stroke="#b8b8b8" stroke-width="7.5"/><path d="M537.8 201.7 540.9 200.6 544.1 199.3" stroke="#b8b8b8" stroke-width="8"/><path d="M544.1 199.3 547.2 198.1" stroke="#b8b8b8" stroke-width="8.5"/><path d="M562.7 200.9 565.9 200.1" stroke="#b8b8b8" stroke-width="10"/><path d="M565.9 200.1 569 199.3 572.1 198.5" stroke="#b8b8b8" stroke-width="10.5"/><path d="M572.1 198.5 575.2 198.2 578.3 198.1 581.4 198" stroke="#b8b8b8" stroke-width="11"/><path d="M475.6 201.1 478.7 203.7" stroke="#bdbdbd" stroke-width="6.5"/><path d="M478.7 203.7 481.8 205.1" stroke="#bdbdbd" stroke-width="7"/><path d="M528.5 204.7 531.6 203.7 534.7 202.7" stroke="#bdbdbd" stroke-width="7.5"/><path d="M534.7 202.7 537.8 201.7" stroke="#bdbdbd" stroke-width="8"/><path d="M550.3 205.4 553.4 204.3 556.5 203.2" stroke="#bdbdbd" stroke-width="9"/><path d="M556.5 203.2 559.6 202.1 562.7 200.9" stroke="#bdbdbd" stroke-width="9.5"/><path d="M500.5 207.2 503.6 207.3 506.7 207.3 509.8 207.3 512.9 207.3 516 206.8" stroke="#c2c2c2" stroke-width="7"/><path d="M472.5 206.7 475.6 208.8M481.8 205.1 484.9 205.7 488 206.2 491.1 206.6 494.3 206.8 497.4 207 500.5 207.2M516 206.8 519.2 206.3 522.3 205.9 525.4 205.4 528.5 204.7" stroke="#c2c2c2" stroke-width="7.5"/><path d="M537.8 209.3 540.9 208.4" stroke="#c2c2c2" stroke-width="8"/><path d="M540.9 208.4 544.1 207.4 547.2 206.4" stroke="#c2c2c2" stroke-width="8.5"/><path d="M547.2 206.4 550.3 205.4" stroke="#c2c2c2" stroke-width="9"/><path d="M569 209.3 572.1 208.8 575.2 208.5 578.3 208.4 581.4 208.4" stroke="#c2c2c2" stroke-width="11"/><path d="M475.6 208.8 478.7 210.9M500.5 213.7 503.6 213.8 506.7 213.8 509.8 213.8 512.9 213.7 516 213.3" stroke="#c7c7c7" stroke-width="7"/><path d="M478.7 210.9 481.8 212 484.9 212.4 488 212.8 491.1 213.2 494.3 213.4 497.4 213.5 500.5 213.7M516 213.3 519.2 213 522.3 212.6 525.4 212.2 528.5 211.6 531.6 210.9" stroke="#c7c7c7" stroke-width="7.5"/><path d="M531.6 210.9 534.7 210.1 537.8 209.3" stroke="#c7c7c7" stroke-width="8"/><path d="M547.2 214.7 550.3 213.9 553.4 213.1" stroke="#c7c7c7" stroke-width="9"/><path d="M553.4 213.1 556.5 212.3 559.6 211.4" stroke="#c7c7c7" stroke-width="9.5"/><path d="M559.6 211.4 562.7 210.6" stroke="#c7c7c7" stroke-width="10"/><path d="M562.7 210.6 565.9 209.9 569 209.3" stroke="#c7c7c7" stroke-width="10.5"/><path d="M500.5 220.1 503.6 220.2 506.7 220.2 509.8 220.2 512.9 220.2" stroke="#cccccc" stroke-width="7"/><path d="M475.6 216.5 478.7 218 481.8 218.9 484.9 219.2 488 219.5 491.1 219.8 494.3 219.9 497.4 220 500.5 220.1M512.9 220.2 516 219.9 519.2 219.6 522.3 219.3 525.4 219 528.5 218.6 531.6 218" stroke="#cccccc" stroke-width="7.5"/><path d="M472.5 214.9 475.6 216.5M531.6 218 534.7 217.4 537.8 216.8" stroke="#cccccc" stroke-width="8"/><path d="M537.8 216.8 540.9 216.2 544.1 215.4 547.2 214.7" stroke="#cccccc" stroke-width="8.5"/><path d="M547.2 222.9 550.3 222.4" stroke="#cccccc" stroke-width="9"/><path d="M550.3 222.4 553.4 221.9 556.5 221.3" stroke="#cccccc" stroke-width="9.5"/><path d="M556.5 221.3 559.6 220.8 562.7 220.2" stroke="#cccccc" stroke-width="10"/><path d="M562.7 220.2 565.9 219.8 569 219.4" stroke="#cccccc" stroke-width="10.5"/><path d="M569 219.4 572.1 219 575.2 218.8 578.3 218.8 581.4 218.7" stroke="#cccccc" stroke-width="11"/><path d="M500.5 233 503.6 233.1 506.7 233.1 509.8 233.1 512.9 233.1M500.5 226.6 503.6 226.6 506.7 226.6 509.8 226.6 512.9 226.6" stroke="#d1d1d1" stroke-width="7"/><path d="M481.8 232.6 484.9 232.7 488 232.8 491.1 232.9 494.3 233 497.4 233 500.5 233M512.9 233.1 516 233 519.2 232.9 522.3 232.8 525.4 232.7 528.5 232.5M478.7 225.2 481.8 225.7 484.9 226 488 226.2 491.1 226.3 494.3 226.4 497.4 226.5 500.5 226.6M512.9 226.6 516 226.4 519.2 226.2 522.3 226 525.4 225.9 528.5 225.6" stroke="#d1d1d1" stroke-width="7.5"/><path d="M475.6 231.8 478.7 232.3 481.8 232.6M528.5 232.5 531.6 232.3 534.7 232.1 537.8 231.9M475.6 224.1 478.7 225.2M528.5 225.6 531.6 225.2 534.7 224.8 537.8 224.4" stroke="#d1d1d1" stroke-width="8"/><path d="M472.5 231.3 475.6 231.8M537.8 231.9 540.9 231.7 544.1 231.5M472.5 223.1 475.6 224.1M537.8 224.4 540.9 223.9 544.1 223.4" stroke="#d1d1d1" stroke-width="8.5"/><path d="M544.1 231.5 547.2 231.2 550.3 231M544.1 223.4 547.2 222.9" stroke="#d1d1d1" stroke-width="9"/><path d="M550.3 231 553.4 230.7 556.5 230.4" stroke="#d1d1d1" stroke-width="9.5"/><path d="M556.5 230.4 559.6 230.1" stroke="#d1d1d1" stroke-width="10"/><path d="M559.6 230.1 562.7 229.9 565.9 229.6 569 229.4" stroke="#d1d1d1" stroke-width="10.5"/><path d="M569 229.4 572.1 229.3 575.2 229.2 578.3 229.1 581.4 229.1" stroke="#d1d1d1" stroke-width="11"/><path d="M556.5 48.8 559.6 42.9M547.2 49 550.3 43.3" stroke="#868686" stroke-width="2"/><path d="M562.7 46.7 565.9 42.4" stroke="#868686" stroke-width="2.5"/><path d="M565.9 42.4 569 38.4" stroke="#868686" stroke-width="3"/><path d="M475.6 62.8 478.7 74.8" stroke="#8c8c8c" stroke-width="1.2"/><path d="M540.9 60.6 544.1 54.8M528.5 65.4 531.6 60.5" stroke="#8c8c8c" stroke-width="1.5"/><path d="M559.6 52.3 562.7 46.7M553.4 54.6 556.5 48.8M547.2 57.3 550.3 51.8M534.7 63 537.8 58.3" stroke="#8c8c8c" stroke-width="2"/><path d="M481.8 67.5 484.9 70.3M488 66.2 491.1 68.5M519.2 67 522.3 64.6 525.4 62.2" stroke="#8c8c8c" stroke-width="2.5"/><path d="M572.1 44.8 575.2 43.2" stroke="#8c8c8c" stroke-width="4"/><path d="M575.2 43.2 578.3 42.8 581.4 42.3" stroke="#8c8c8c" stroke-width="4.5"/><path d="M478.7 67.7 481.8 74.4" stroke="#939393" stroke-width="1.5"/><path d="M531.6 67.7 534.7 63M525.4 69 528.5 65.4" stroke="#939393" stroke-width="2"/><path d="M488 92.9 491.1 94.8M512.9 97.6 516 95.6M516 69.4 519.2 67" stroke="#939393" stroke-width="2.5"/><path d="M565.9 52.2 569 48.4 572.1 44.8M491.1 101.4 494.3 102.2M491.1 94.8 494.3 95.7M491.1 68.5 494.3 69.6 497.4 70.6" stroke="#939393" stroke-width="3"/><path d="M472.5 100 475.6 108.9M475.6 101.2 478.7 110.6M472.5 67.2 475.6 78.2" stroke="#999999" stroke-width="1.2"/><path d="M478.7 103.5 481.8 108.8M478.7 89.2 481.8 95" stroke="#999999" stroke-width="1.5"/><path d="M556.5 57.9 559.6 52.3M550.3 60.3 553.4 54.6M544.1 62.8 547.2 57.3M537.8 65.8 540.9 60.6" stroke="#999999" stroke-width="2"/><path d="M562.7 56.3 565.9 52.2M484.9 104.1 488 106.2 491.1 108M512.9 104.1 516 102.1 519.2 100.2 522.3 98.2M484.9 90.6 488 92.9M484.9 70.3 488 72.9M522.3 71.3 525.4 69M512.9 71.8 516 69.4" stroke="#999999" stroke-width="2.5"/><path d="M500.5 103.9 503.6 104.4 506.7 104.4 509.8 104.4 512.9 104.1M497.4 70.6 500.5 71.6 503.6 72.3 506.7 72.3 509.8 72.3 512.9 71.8" stroke="#999999" stroke-width="3"/><path d="M472.5 75.4 475.6 85.9 478.7 96.3M475.6 70.5 478.7 82" stroke="#9f9f9f" stroke-width="1.2"/><path d="M553.4 63.4 556.5 57.9M547.2 65.6 550.3 60.3M540.9 68.4 544.1 62.8M534.7 70.3 537.8 65.8M528.5 72.3 531.6 67.7" stroke="#9f9f9f" stroke-width="2"/><path d="M512.9 110.5 516 108.7 519.2 106.8M522.3 98.2 525.4 96.3M516 95.6 519.2 93.5M488 72.9 491.1 75.1M519.2 73.6 522.3 71.3" stroke="#9f9f9f" stroke-width="2.5"/><path d="M491.1 108 494.3 108.8 497.4 109.6M497.4 90.1 500.5 91 503.6 91.6 506.7 91.6 509.8 91.6 512.9 91.2" stroke="#9f9f9f" stroke-width="3"/><path d="M572.1 55 575.2 53.5 578.3 53.1 581.4 52.7" stroke="#9f9f9f" stroke-width="4.5"/><path d="M472.5 83.6 475.6 93.6M475.6 78.2 478.7 89.2" stroke="#a6a6a6" stroke-width="1.2"/><path d="M478.7 82 481.8 88.1M478.7 74.8 481.8 81.3" stroke="#a6a6a6" stroke-width="1.5"/><path d="M559.6 61.6 562.7 56.3M537.8 73.4 540.9 68.4M531.6 74.8 534.7 70.3M525.4 75.8 528.5 72.3" stroke="#a6a6a6" stroke-width="2"/><path d="M481.8 108.8 484.9 110.9M519.2 106.8 522.3 105 525.4 103.1M481.8 88.1 484.9 90.6M519.2 93.5 522.3 91.5M481.8 81.3 484.9 83.8M512.9 91.2 516 89M481.8 74.4 484.9 77.1 488 79.6M512.9 78.3 516 76 519.2 73.6" stroke="#a6a6a6" stroke-width="2.5"/><path d="M569 58.5 572.1 55M497.4 109.6 500.5 110.3 503.6 110.9 506.7 110.9 509.8 110.9 512.9 110.5M491.1 88.3 494.3 89.2 497.4 90.1M491.1 75.1 494.3 76.1 497.4 77.1" stroke="#a6a6a6" stroke-width="3"/><path d="M556.5 66.9 559.6 61.6M528.5 100.2 531.6 96.3M550.3 68.8 553.4 63.4M544.1 70.9 547.2 65.6M528.5 79.3 531.6 74.8" stroke="#acacac" stroke-width="2"/><path d="M484.9 110.9 488 112.9M519.2 113.4 522.3 111.7 525.4 109.9 528.5 107.2M525.4 103.1 528.5 100.2M525.4 96.3 528.5 93.2M522.3 91.5 525.4 89.4M484.9 83.8 488 86.2 491.1 88.3M516 89 519.2 86.9M488 79.6 491.1 81.7M512.9 84.7 516 82.5 519.2 80.3 522.3 78 525.4 75.8" stroke="#acacac" stroke-width="2.5"/><path d="M565.9 62.1 569 58.5M491.1 81.7 494.3 82.6 497.4 83.6 500.5 84.5 503.6 85.2 506.7 85.2 509.8 85.2 512.9 84.7M497.4 77.1 500.5 78.1 503.6 78.7 506.7 78.7 509.8 78.7 512.9 78.3" stroke="#acacac" stroke-width="3"/><path d="M475.6 162.7 478.7 167.9M472.5 108.2 475.6 116.6M478.7 110.6 481.8 115.7" stroke="#b2b2b2" stroke-width="1.5"/><path d="M472.5 165.7 475.6 170.4 478.7 175.1M528.5 107.2 531.6 103.5 534.7 99.7M531.6 96.3 534.7 92.4M547.2 73.9 550.3 68.8M528.5 93.2 531.6 89.1M540.9 76.1 544.1 70.9M525.4 89.4 528.5 86.3 531.6 82 534.7 77.7 537.8 73.4M525.4 82.6 528.5 79.3" stroke="#b2b2b2" stroke-width="2"/><path d="M478.7 167.9 481.8 170.7M512.9 117 516 115.2 519.2 113.4M519.2 86.9 522.3 84.8 525.4 82.6" stroke="#b2b2b2" stroke-width="2.5"/><path d="M481.8 170.7 484.9 171.8 488 172.9 491.1 173.7 494.3 174.1 497.4 174.5 500.5 174.9 503.6 175.2 506.7 175.2 509.8 175.2 512.9 175 516 174.1 519.2 173.2 522.3 172.2M481.8 163.8 484.9 165 488 166.2 491.1 167.2 494.3 167.6 497.4 168 500.5 168.5 503.6 168.8 506.7 168.8 509.8 168.8 512.9 168.6 516 167.5 519.2 166.5 522.3 165.5M500.5 162 503.6 162.3 506.7 162.3 509.8 162.3 512.9 162.1 516 161 519.2 159.9M562.7 66 565.9 62.1" stroke="#b2b2b2" stroke-width="3"/><path d="M475.6 108.9 478.7 117.8" stroke="#b9b9b9" stroke-width="1.2"/><path d="M472.5 173.9 475.6 178 478.7 182.2M472.5 157.5 475.6 162.7M528.5 114.1 531.6 110.6 534.7 107.1M537.8 103.6 540.9 99.5M534.7 99.7 537.8 96 540.9 91.7M553.4 72.2 556.5 66.9M534.7 92.4 537.8 88.5M544.1 78.9 547.2 73.9M531.6 89.1 534.7 85 537.8 80.9 540.9 76.1" stroke="#b9b9b9" stroke-width="2"/><path d="M478.7 175.1 481.8 177.6M478.7 160.7 481.8 163.8M528.5 162.9 531.6 160.7 534.7 158.6M528.5 155.9 531.6 153.6 534.7 151.2M525.4 150.8 528.5 149M522.3 118.4 525.4 116.7 528.5 114.1M534.7 107.1 537.8 103.6M559.6 71 562.7 66M488 112.9 491.1 114.6" stroke="#b9b9b9" stroke-width="2.5"/><path d="M481.8 177.6 484.9 178.6 488 179.5 491.1 180.3 494.3 180.7 497.4 181 500.5 181.4 503.6 181.6 506.7 181.6 509.8 181.6 512.9 181.5 516 180.6 519.2 179.8 522.3 179 525.4 178.1 528.5 176.8 531.6 175.1 534.7 173.3 537.8 171.5M522.3 172.2 525.4 171.3 528.5 169.9 531.6 167.9 534.7 165.9 537.8 164M522.3 165.5 525.4 164.5 528.5 162.9M534.7 158.6 537.8 156.4M488 159.5 491.1 160.6 494.3 161.1 497.4 161.5 500.5 162M519.2 159.9 522.3 158.8 525.4 157.7 528.5 155.9M500.5 155.5 503.6 155.9 506.7 155.9 509.8 155.9 512.9 155.7 516 154.5 519.2 153.3 522.3 152 525.4 150.8M491.1 114.6 494.3 115.3 497.4 116.1M506.7 117.3 509.8 117.3 512.9 117" stroke="#b9b9b9" stroke-width="3"/><path d="M475.6 155 478.7 160.7" stroke="#bfbfbf" stroke-width="1.5"/><path d="M478.7 153.6 481.8 156.9M528.5 121.1 531.6 117.8M537.8 111.1 540.9 107.3 544.1 103 547.2 98.7M540.9 99.5 544.1 95M556.5 76 559.6 71M540.9 91.7 544.1 86.9M550.3 77.4 553.4 72.2M537.8 88.5 540.9 83.9 544.1 78.9" stroke="#bfbfbf" stroke-width="2"/><path d="M472.5 182.1 475.6 185.7M478.7 182.2 481.8 184.5M537.8 156.4 540.9 153.9 544.1 151.2M534.7 151.2 537.8 148.9 540.9 146.2 544.1 143.1M528.5 149 531.6 146.4 534.7 143.9 537.8 141.3 540.9 138.4M525.4 144 528.5 142 531.6 139.3 534.7 136.5 537.8 133.8M525.4 137.2 528.5 135 531.6 132.1 534.7 129.2M525.4 130.4 528.5 128.1 531.6 124.9 534.7 121.8M544.1 111 547.2 107M516 128.3 519.2 126.7 522.3 125.1M525.4 123.6 528.5 121.1M531.6 117.8 534.7 114.5 537.8 111.1M512.9 123.4 516 121.8 519.2 120.1 522.3 118.4" stroke="#bfbfbf" stroke-width="2.5"/><path d="M481.8 184.5 484.9 185.4 488 186.2M519.2 186.4 522.3 185.7 525.4 184.9 528.5 183.8 531.6 182.2 534.7 180.7 537.8 179.1 540.9 177.3 544.1 175.3 547.2 173.2M537.8 171.5 540.9 169.5 544.1 167.2 547.2 165M537.8 164 540.9 161.7 544.1 159.2 547.2 156.7M544.1 151.2 547.2 148.4M481.8 156.9 484.9 158.3 488 159.5M494.3 154.5 497.4 155 500.5 155.5M503.6 149.5 506.7 149.5 509.8 149.5 512.9 149.2 516 147.9 519.2 146.6 522.3 145.3 525.4 144M522.3 138.6 525.4 137.2M522.3 125.1 525.4 123.6M569 68.5 572.1 65.3M509.8 123.7 512.9 123.4M497.4 116.1 500.5 116.8 503.6 117.3 506.7 117.3" stroke="#bfbfbf" stroke-width="3"/><path d="M572.1 65.3 575.2 63.8 578.3 63.5 581.4 63.1" stroke="#bfbfbf" stroke-width="4.5"/><path d="M472.5 149.3 475.6 155" stroke="#c6c6c6" stroke-width="1.5"/><path d="M475.6 185.7 478.7 189.4M540.9 115 544.1 111M544.1 95 547.2 90.4 550.3 85.9M553.4 81 556.5 76M544.1 86.9 547.2 82.2 550.3 77.4" stroke="#c6c6c6" stroke-width="2"/><path d="M544.1 143.1 547.2 140.1M540.9 138.4 544.1 135.1 547.2 131.8 550.3 128.6M537.8 133.8 540.9 130.6 544.1 127.1 547.2 123.6M512.9 142.8 516 141.4M534.7 129.2 537.8 126.2 540.9 122.8 544.1 119 547.2 115.3 550.3 111.5 553.4 107.5 556.5 103.3M512.9 136.3 516 134.8 519.2 133.3M534.7 121.8 537.8 118.7 540.9 115M547.2 107 550.3 103 553.4 98.7M512.9 129.9 516 128.3M547.2 98.7 550.3 94.4M481.8 115.7 484.9 117.7" stroke="#c6c6c6" stroke-width="2.5"/><path d="M537.8 186.6 540.9 185 544.1 183.3M488 186.2 491.1 186.9 494.3 187.2 497.4 187.5 500.5 187.8M509.8 188.1 512.9 187.9 516 187.2 519.2 186.4M547.2 173.2 550.3 171.2M547.2 165 550.3 162.7 553.4 160.3 556.5 157.8M547.2 156.7 550.3 154.2 553.4 151.5 556.5 148.7 559.6 145.9M547.2 148.4 550.3 145.6 553.4 142.7 556.5 139.6M547.2 140.1 550.3 137.1 553.4 133.9M484.9 151.5 488 152.9 491.1 154 494.3 154.5M497.4 148.5 500.5 149.1 503.6 149.5M506.7 143 509.8 143 512.9 142.8M516 141.4 519.2 140 522.3 138.6M509.8 136.6 512.9 136.3M519.2 133.3 522.3 131.9 525.4 130.4M509.8 130.2 512.9 129.9M562.7 75.6 565.9 71.9 569 68.5M503.6 123.7 506.7 123.7 509.8 123.7" stroke="#c6c6c6" stroke-width="3"/><path d="M544.1 183.3 547.2 181.5 550.3 179.8 553.4 177.9 556.5 175.9 559.6 174 562.7 172M550.3 171.2 553.4 169.1 556.5 166.8 559.6 164.6 562.7 162.4M556.5 157.8 559.6 155.3 562.7 152.7" stroke="#c6c6c6" stroke-width="3.5"/><path d="M562.7 172 565.9 170.5M562.7 162.4 565.9 160.6M562.7 152.7 565.9 150.8" stroke="#c6c6c6" stroke-width="4"/><path d="M475.6 147.3 478.7 153.6" stroke="#cccccc" stroke-width="1.5"/><path d="M478.7 146.4 481.8 150.1M550.3 94.4 553.4 89.9M550.3 85.9 553.4 81" stroke="#cccccc" stroke-width="2"/><path d="M550.3 128.6 553.4 125.1 556.5 121.4M547.2 123.6 550.3 120 553.4 116.3 556.5 112.4 559.6 108.4 562.7 104.5M556.5 103.3 559.6 99.1 562.7 94.9M553.4 98.7 556.5 94.2 559.6 89.7M553.4 89.9 556.5 85.1 559.6 80.4 562.7 75.6M484.9 117.7 488 119.5" stroke="#cccccc" stroke-width="2.5"/><path d="M531.6 189.4 534.7 188 537.8 186.6M500.5 187.8 503.6 188.1 506.7 188.1 509.8 188.1M556.5 139.6 559.6 136.5 562.7 133.5M553.4 133.9 556.5 130.5 559.6 127.2 562.7 123.8M481.8 150.1 484.9 151.5M556.5 121.4 559.6 117.8 562.7 114.2M491.1 147.4 494.3 148 497.4 148.5M562.7 104.5 565.9 101.5M500.5 142.6 503.6 143 506.7 143M500.5 136.2 503.6 136.6 506.7 136.6 509.8 136.6M500.5 129.7 503.6 130.2 506.7 130.2 509.8 130.2M494.3 121.9 497.4 122.6 500.5 123.3 503.6 123.7" stroke="#cccccc" stroke-width="3"/><path d="M553.4 186.7 556.5 185 559.6 183.3M559.6 145.9 562.7 143.1 565.9 140.9M562.7 133.5 565.9 131.1 569 128.9M562.7 123.8 565.9 121.2M562.7 114.2 565.9 111.4 569 108.8 572.1 106.3M565.9 101.5 569 98.7" stroke="#cccccc" stroke-width="3.5"/><path d="M559.6 183.3 562.7 181.7 565.9 180.4M565.9 170.5 569 169.1M565.9 160.6 569 159.1 572.1 157.5M565.9 150.8 569 149 572.1 147.3M565.9 140.9 569 138.9 572.1 137M569 128.9 572.1 126.8" stroke="#cccccc" stroke-width="4"/><path d="M565.9 180.4 569 179.2 572.1 178 575.2 177.5M569 169.1 572.1 167.8 575.2 167.2M572.1 157.5 575.2 156.8M572.1 147.3 575.2 146.5 578.3 146.3M572.1 137 575.2 136.2 578.3 135.9M575.2 115.5 578.3 115.2M572.1 106.3 575.2 105.2 578.3 104.9 581.4 104.6M572.1 75.5 575.2 74.2 578.3 73.8 581.4 73.5" stroke="#cccccc" stroke-width="4.5"/><path d="M575.2 177.5 578.3 177.4 581.4 177.2M575.2 167.2 578.3 167 581.4 166.9M575.2 156.8 578.3 156.7 581.4 156.5M578.3 146.3 581.4 146.1M578.3 135.9 581.4 135.7M578.3 115.2 581.4 115" stroke="#cccccc" stroke-width="5"/><path d="M475.6 116.6 478.7 125" stroke="#d2d2d2" stroke-width="1.2"/><path d="M472.5 141.1 475.6 147.3M472.5 116.4 475.6 124.3" stroke="#d2d2d2" stroke-width="1.5"/><path d="M478.7 117.8 481.8 122.5" stroke="#d2d2d2" stroke-width="2"/><path d="M478.7 189.4 481.8 191.3M559.6 89.7 562.7 85.3M481.8 122.5 484.9 124.4 488 126.2M488 119.5 491.1 121.1" stroke="#d2d2d2" stroke-width="2.5"/><path d="M525.4 191.8 528.5 190.7 531.6 189.4M481.8 143.2 484.9 144.7 488 146.2 491.1 147.4M494.3 141.5 497.4 142 500.5 142.6M562.7 94.9 565.9 91.6M494.3 134.9 497.4 135.5 500.5 136.2M562.7 85.3 565.9 81.8 569 78.6M491.1 127.7 494.3 128.4 497.4 129.1 500.5 129.7M491.1 121.1 494.3 121.9" stroke="#d2d2d2" stroke-width="3"/><path d="M547.2 189.8 550.3 188.3 553.4 186.7M565.9 121.2 569 118.8 572.1 116.5M569 98.7 572.1 96M565.9 91.6 569 88.7M569 78.6 572.1 75.5" stroke="#d2d2d2" stroke-width="3.5"/><path d="M572.1 126.8 575.2 125.8 578.3 125.6M572.1 116.5 575.2 115.5M572.1 96 575.2 94.8 578.3 94.5 581.4 94.2M572.1 85.8 575.2 84.5 578.3 84.2 581.4 83.8" stroke="#d2d2d2" stroke-width="4.5"/><path d="M578.3 187.7 581.4 187.6M578.3 125.6 581.4 125.4" stroke="#d2d2d2" stroke-width="5"/><path d="M472.5 132.9 475.6 139.6 478.7 146.4M472.5 124.6 475.6 132 478.7 139.3M475.6 124.3 478.7 132.1" stroke="#d9d9d9" stroke-width="1.5"/><path d="M478.7 139.3 481.8 143.2M478.7 132.1 481.8 136.3M478.7 125 481.8 129.4" stroke="#d9d9d9" stroke-width="2"/><path d="M481.8 129.4 484.9 131.2 488 132.9M488 126.2 491.1 127.7" stroke="#d9d9d9" stroke-width="2.5"/><path d="M472.5 190.3 475.6 193.4M481.8 136.3 484.9 138 488 139.5 491.1 140.9 494.3 141.5M488 132.9 491.1 134.3 494.3 134.9" stroke="#d9d9d9" stroke-width="3"/><path d="M544.1 191.3 547.2 189.8M481.8 191.3 484.9 192.1M516 193.7 519.2 193.1 522.3 192.4 525.4 191.8M569 88.7 572.1 85.8" stroke="#d9d9d9" stroke-width="3.5"/><path d="M562.7 191.3 565.9 190.2M537.8 194.2 540.9 192.8 544.1 191.3" stroke="#d9d9d9" stroke-width="4"/><path d="M565.9 190.2 569 189.2 572.1 188.3 575.2 187.8" stroke="#d9d9d9" stroke-width="4.5"/><path d="M575.2 187.8 578.3 187.7" stroke="#d9d9d9" stroke-width="5"/><path d="M484.9 192.1 488 192.8 491.1 193.5 494.3 193.7 497.4 194 500.5 194.3M503.6 194.5 506.7 194.5 509.8 194.5 512.9 194.4 516 193.7" stroke="#dfdfdf" stroke-width="3.5"/><path d="M531.6 196.5 534.7 195.4 537.8 194.2" stroke="#dfdfdf" stroke-width="4"/><path d="M556.5 194.1 559.6 192.7" stroke="#dfdfdf" stroke-width="4.5"/><path d="M559.6 192.7 562.7 191.3" stroke="#dfdfdf" stroke-width="5"/><path d="M475.6 193.4 478.7 196.5" stroke="#e6e6e6" stroke-width="3"/><path d="M519.2 199.7 522.3 199.1 525.4 198.6 528.5 197.7 531.6 196.5M500.5 194.3 503.6 194.5" stroke="#e6e6e6" stroke-width="3.5"/><path d="M544.1 199.3 547.2 198.1" stroke="#e6e6e6" stroke-width="4"/><path d="M547.2 198.1 550.3 196.8 553.4 195.5 556.5 194.1" stroke="#e6e6e6" stroke-width="4.5"/><path d="M475.6 201.1 478.7 203.7" stroke="#ececec" stroke-width="3"/><path d="M472.5 198.5 475.6 201.1M478.7 196.5 481.8 198.2 484.9 198.9 488 199.5 491.1 200 494.3 200.3 497.4 200.5 500.5 200.8 503.6 200.9 506.7 200.9 509.8 200.9 512.9 200.8 516 200.3 519.2 199.7" stroke="#ececec" stroke-width="3.5"/><path d="M528.5 204.7 531.6 203.7 534.7 202.7 537.8 201.7 540.9 200.6 544.1 199.3" stroke="#ececec" stroke-width="4"/><path d="M553.4 204.3 556.5 203.2" stroke="#ececec" stroke-width="4.5"/><path d="M556.5 203.2 559.6 202.1 562.7 200.9" stroke="#ececec" stroke-width="5"/><path d="M562.7 200.9 565.9 200.1 569 199.3 572.1 198.5 575.2 198.2" stroke="#ececec" stroke-width="5.5"/><path d="M575.2 198.2 578.3 198.1 581.4 198" stroke="#ececec" stroke-width="6"/><path d="M488 232.8 491.1 232.9 494.3 233 497.4 233 500.5 233 503.6 233.1 506.7 233.1 509.8 233.1 512.9 233.1 516 233 519.2 232.9 522.3 232.8M472.5 206.7 475.6 208.8 478.7 210.9 481.8 212M484.9 212.4 488 212.8 491.1 213.2 494.3 213.4 497.4 213.5 500.5 213.7M512.9 213.7 516 213.3 519.2 213 522.3 212.6M478.7 203.7 481.8 205.1M484.9 205.7 488 206.2 491.1 206.6 494.3 206.8 497.4 207 500.5 207.2 503.6 207.3 506.7 207.3 509.8 207.3 512.9 207.3 516 206.8 519.2 206.3 522.3 205.9" stroke="#f2f2f2" stroke-width="3.5"/><path d="M484.9 232.7 488 232.8M522.3 232.8 525.4 232.7M481.8 212 484.9 212.4M522.3 212.6 525.4 212.2 528.5 211.6 531.6 210.9 534.7 210.1 537.8 209.3 540.9 208.4 544.1 207.4M481.8 205.1 484.9 205.7M522.3 205.9 525.4 205.4 528.5 204.7" stroke="#f2f2f2" stroke-width="4"/><path d="M550.3 213.9 553.4 213.1M544.1 207.4 547.2 206.4 550.3 205.4 553.4 204.3" stroke="#f2f2f2" stroke-width="4.5"/><path d="M553.4 213.1 556.5 212.3 559.6 211.4 562.7 210.6" stroke="#f2f2f2" stroke-width="5"/><path d="M562.7 210.6 565.9 209.9 569 209.3 572.1 208.8 575.2 208.5" stroke="#f2f2f2" stroke-width="5.5"/><path d="M575.2 208.5 578.3 208.4 581.4 208.4" stroke="#f2f2f2" stroke-width="6"/><path d="M488 226.2 491.1 226.3 494.3 226.4 497.4 226.5 500.5 226.6 503.6 226.6 506.7 226.6 509.8 226.6 512.9 226.6 516 226.4 519.2 226.2 522.3 226M475.6 216.5 478.7 218M484.9 219.2 488 219.5 491.1 219.8 494.3 219.9 497.4 220 500.5 220.1 503.6 220.2 506.7 220.2 509.8 220.2 512.9 220.2 516 219.9 519.2 219.6 522.3 219.3M500.5 213.7 503.6 213.8 506.7 213.8 509.8 213.8 512.9 213.7" stroke="#f9f9f9" stroke-width="3.5"/><path d="M475.6 231.8 478.7 232.3 481.8 232.6 484.9 232.7M525.4 232.7 528.5 232.5 531.6 232.3 534.7 232.1 537.8 231.9M472.5 223.1 475.6 224.1 478.7 225.2 481.8 225.7 484.9 226 488 226.2M522.3 226 525.4 225.9 528.5 225.6 531.6 225.2 534.7 224.8 537.8 224.4 540.9 223.9M472.5 214.9 475.6 216.5M478.7 218 481.8 218.9 484.9 219.2M522.3 219.3 525.4 219 528.5 218.6 531.6 218 534.7 217.4 537.8 216.8 540.9 216.2" stroke="#f9f9f9" stroke-width="4"/><path d="M472.5 231.3 475.6 231.8M537.8 231.9 540.9 231.7 544.1 231.5 547.2 231.2 550.3 231M540.9 223.9 544.1 223.4 547.2 222.9 550.3 222.4M540.9 216.2 544.1 215.4 547.2 214.7 550.3 213.9" stroke="#f9f9f9" stroke-width="4.5"/><path d="M550.3 231 553.4 230.7 556.5 230.4 559.6 230.1M550.3 222.4 553.4 221.9 556.5 221.3 559.6 220.8 562.7 220.2" stroke="#f9f9f9" stroke-width="5"/><path d="M559.6 230.1 562.7 229.9 565.9 229.6 569 229.4 572.1 229.3M562.7 220.2 565.9 219.8 569 219.4 572.1 219" stroke="#f9f9f9" stroke-width="5.5"/><path d="M572.1 229.3 575.2 229.2 578.3 229.1 581.4 229.1M572.1 219 575.2 218.8 578.3 218.8 581.4 218.7" stroke="#f9f9f9" stroke-width="6"/></g><clipPath id="sc2"><rect x="590.1" y="21.5" width="15" height="218"/></clipPath><g clip-path="url(#sc2)" fill="none" stroke-linejoin="round"><path d="M593.2 65.4 595.4 77.2" stroke="#858585" stroke-width="3.5"/><path d="M591 57 593.2 65.4" stroke="#858585" stroke-width="5"/><path d="M588.8 69.8 591 77.3" stroke="#858585" stroke-width="6"/><path d="M597.5 72.3 599.7 85.4" stroke="#8a8a8a" stroke-width="3"/><path d="M595.4 77.2 597.5 89" stroke="#8a8a8a" stroke-width="3.5"/><path d="M591 77.3 593.2 84.8" stroke="#8a8a8a" stroke-width="5.5"/><path d="M601.9 84.4 604 98.9 606.2 113.3M604 86.1 606.2 101.8" stroke="#8f8f8f" stroke-width="2"/><path d="M599.7 85.4 601.9 98.5 604 111.6" stroke="#8f8f8f" stroke-width="2.5"/><path d="M597.5 89 599.7 100.8 601.9 112.6" stroke="#8f8f8f" stroke-width="3"/><path d="M595.4 95.3 597.5 105.7" stroke="#8f8f8f" stroke-width="3.5"/><path d="M593.2 84.8 595.4 95.3" stroke="#8f8f8f" stroke-width="4"/><path d="M591 97.6 593.2 104.1" stroke="#8f8f8f" stroke-width="6.5"/><path d="M588.8 91 591 97.6" stroke="#8f8f8f" stroke-width="7"/><path d="M604 111.6 606.2 124.8" stroke="#949494" stroke-width="2"/><path d="M601.9 112.6 604 124.4 606.2 136.2" stroke="#949494" stroke-width="2.5"/><path d="M599.7 116.2 601.9 126.7" stroke="#949494" stroke-width="3"/><path d="M597.5 105.7 599.7 116.2" stroke="#949494" stroke-width="3.5"/><path d="M595.4 113.3 597.5 122.5 599.7 131.6" stroke="#949494" stroke-width="4"/><path d="M593.2 104.1 595.4 113.3" stroke="#949494" stroke-width="4.5"/><path d="M593.2 123.5 595.4 131.3" stroke="#949494" stroke-width="5"/><path d="M591 117.8 593.2 123.5" stroke="#949494" stroke-width="7.5"/><path d="M588.8 112.2 591 117.8" stroke="#949494" stroke-width="8"/><path d="M604 137.2 606.2 147.7" stroke="#999999" stroke-width="2.5"/><path d="M604 150 606.2 159.2M601.9 126.7 604 137.2" stroke="#999999" stroke-width="3"/><path d="M604 162.8 606.2 170.7M599.7 131.6 601.9 140.8 604 150" stroke="#999999" stroke-width="3.5"/><path d="M599.7 147.1 601.9 154.9 604 162.8" stroke="#999999" stroke-width="4"/><path d="M601.9 169 604 175.6M597.5 139.2 599.7 147.1" stroke="#999999" stroke-width="4.5"/><path d="M599.7 162.5 601.9 169M595.4 131.3 597.5 139.2" stroke="#999999" stroke-width="5"/><path d="M595.4 149.4 597.5 155.9 599.7 162.5" stroke="#999999" stroke-width="5.5"/><path d="M588.8 165.3 591 168.5 593.2 171.8M593.2 142.8 595.4 149.4" stroke="#999999" stroke-width="6"/><path d="M595.4 167.4 597.5 172.6" stroke="#999999" stroke-width="7"/><path d="M593.2 162.1 595.4 167.4" stroke="#999999" stroke-width="7.5"/><path d="M591 138.1 593.2 142.8" stroke="#999999" stroke-width="8.5"/><path d="M588.8 133.4 591 138.1" stroke="#999999" stroke-width="9"/><path d="M591 158.4 593.2 162.1" stroke="#999999" stroke-width="10.5"/><path d="M588.8 154.6 591 158.4" stroke="#999999" stroke-width="11"/><path d="M595.4 176.4 597.5 181 599.7 185.6M604 175.6 606.2 182.1" stroke="#9e9e9e" stroke-width="4"/><path d="M593.2 171.8 595.4 176.4" stroke="#9e9e9e" stroke-width="4.5"/><path d="M593.2 181.5 595.4 185.4" stroke="#9e9e9e" stroke-width="5"/><path d="M599.7 177.9 601.9 183.1" stroke="#9e9e9e" stroke-width="6"/><path d="M591 178.7 593.2 181.5M597.5 172.6 599.7 177.9" stroke="#9e9e9e" stroke-width="6.5"/><path d="M588.8 175.9 591 178.7" stroke="#9e9e9e" stroke-width="7"/><path d="M599.7 185.6 601.9 190.2" stroke="#a3a3a3" stroke-width="3.5"/><path d="M595.4 185.4 597.5 189.3 599.7 193.3" stroke="#a3a3a3" stroke-width="4.5"/><path d="M604 188.4 606.2 193.6" stroke="#a3a3a3" stroke-width="5"/><path d="M601.9 183.1 604 188.4" stroke="#a3a3a3" stroke-width="5.5"/><path d="M588.8 186.5 591 188.8 593.2 191.1" stroke="#a3a3a3" stroke-width="7.5"/><path d="M601.9 190.2 604 194.8 606.2 199.3" stroke="#a8a8a8" stroke-width="3"/><path d="M599.7 193.3 601.9 197.2" stroke="#a8a8a8" stroke-width="4"/><path d="M595.4 194.4 597.5 197.7" stroke="#a8a8a8" stroke-width="5"/><path d="M593.2 191.1 595.4 194.4" stroke="#a8a8a8" stroke-width="5.5"/><path d="M601.9 197.2 604 201.1" stroke="#adadad" stroke-width="3.5"/><path d="M597.5 197.7 599.7 201" stroke="#adadad" stroke-width="5"/><path d="M591 198.9 593.2 200.8" stroke="#adadad" stroke-width="8"/><path d="M588.8 197.1 591 198.9" stroke="#adadad" stroke-width="8.5"/><path d="M604 201.1 606.2 205.1" stroke="#b2b2b2" stroke-width="3.5"/><path d="M599.7 201 601.9 204.3" stroke="#b2b2b2" stroke-width="4.5"/><path d="M595.4 203.4 597.5 206.1" stroke="#b2b2b2" stroke-width="6"/><path d="M593.2 200.8 595.4 203.4" stroke="#b2b2b2" stroke-width="6.5"/><path d="M601.9 204.3 604 207.5 606.2 210.8" stroke="#b8b8b8" stroke-width="4"/><path d="M597.5 206.1 599.7 208.7" stroke="#b8b8b8" stroke-width="5.5"/><path d="M588.8 207.7 591 209.1" stroke="#b8b8b8" stroke-width="9.5"/><path d="M599.7 208.7 601.9 211.3 604 213.9" stroke="#bdbdbd" stroke-width="5"/><path d="M595.4 212.5 597.5 214.4" stroke="#bdbdbd" stroke-width="7"/><path d="M593.2 210.5 595.4 212.5" stroke="#bdbdbd" stroke-width="7.5"/><path d="M591 209.1 593.2 210.5" stroke="#bdbdbd" stroke-width="9"/><path d="M604 213.9 606.2 216.6" stroke="#c2c2c2" stroke-width="4.5"/><path d="M601.9 218.4 604 220.3" stroke="#c2c2c2" stroke-width="5.5"/><path d="M599.7 216.4 601.9 218.4" stroke="#c2c2c2" stroke-width="6"/><path d="M597.5 214.4 599.7 216.4" stroke="#c2c2c2" stroke-width="6.5"/><path d="M591 219.2 593.2 220.2" stroke="#c2c2c2" stroke-width="10"/><path d="M588.8 218.3 591 219.2" stroke="#c2c2c2" stroke-width="10.5"/><path d="M604 220.3 606.2 222.3" stroke="#c7c7c7" stroke-width="5"/><path d="M599.7 224.1 601.9 225.4" stroke="#c7c7c7" stroke-width="7"/><path d="M597.5 222.8 599.7 224.1" stroke="#c7c7c7" stroke-width="7.5"/><path d="M595.4 221.5 597.5 222.8" stroke="#c7c7c7" stroke-width="8"/><path d="M593.2 220.2 595.4 221.5" stroke="#c7c7c7" stroke-width="8.5"/><path d="M604 226.7 606.2 228" stroke="#cccccc" stroke-width="6"/><path d="M601.9 225.4 604 226.7" stroke="#cccccc" stroke-width="6.5"/><path d="M595.4 230.5 597.5 231.1" stroke="#cccccc" stroke-width="9"/><path d="M593.2 229.8 595.4 230.5" stroke="#cccccc" stroke-width="9.5"/><path d="M591 229.4 593.2 229.8" stroke="#cccccc" stroke-width="10.5"/><path d="M588.8 228.9 591 229.4" stroke="#cccccc" stroke-width="11"/><path d="M604 233.1 606.2 233.8" stroke="#d1d1d1" stroke-width="6.5"/><path d="M601.9 232.5 604 233.1" stroke="#d1d1d1" stroke-width="7"/><path d="M599.7 231.8 601.9 232.5" stroke="#d1d1d1" stroke-width="8"/><path d="M597.5 231.1 599.7 231.8" stroke="#d1d1d1" stroke-width="8.5"/><path d="M591 57 593.2 65.4" stroke="#8c8c8c" stroke-width="2.5"/><path d="M597.5 72.3 599.7 85.4M601.9 84.4 604 98.9M604 86.1 606.2 101.8" stroke="#999999" stroke-width="1.2"/><path d="M593.2 65.4 595.4 77.2" stroke="#999999" stroke-width="1.5"/><path d="M599.7 85.4 601.9 98.5" stroke="#a6a6a6" stroke-width="1.2"/><path d="M595.4 77.2 597.5 89" stroke="#a6a6a6" stroke-width="1.5"/><path d="M588.8 69.8 591 77.3" stroke="#a6a6a6" stroke-width="2.5"/><path d="M604 98.9 606.2 113.3" stroke="#acacac" stroke-width="1.2"/><path d="M591 77.3 593.2 84.8" stroke="#acacac" stroke-width="2.5"/><path d="M601.9 98.5 604 111.6" stroke="#b2b2b2" stroke-width="1.2"/><path d="M593.2 84.8 595.4 95.3M597.5 89 599.7 100.8" stroke="#b2b2b2" stroke-width="1.5"/><path d="M599.7 100.8 601.9 112.6" stroke="#b9b9b9" stroke-width="1.2"/><path d="M595.4 95.3 597.5 105.7" stroke="#bfbfbf" stroke-width="1.5"/><path d="M604 111.6 606.2 124.8" stroke="#c6c6c6" stroke-width="1.2"/><path d="M597.5 105.7 599.7 116.2" stroke="#c6c6c6" stroke-width="1.5"/><path d="M588.8 91 591 97.6 593.2 104.1" stroke="#c6c6c6" stroke-width="3"/><path d="M604 137.2 606.2 147.7M601.9 112.6 604 124.4 606.2 136.2" stroke="#cccccc" stroke-width="1.2"/><path d="M601.9 154.9 604 162.8 606.2 170.7M597.5 122.5 599.7 131.6 601.9 140.8 604 150 606.2 159.2M599.7 116.2 601.9 126.7 604 137.2" stroke="#cccccc" stroke-width="1.5"/><path d="M593.2 171.8 595.4 176.4M599.7 162.5 601.9 169 604 175.6M595.4 131.3 597.5 139.2 599.7 147.1 601.9 154.9M593.2 104.1 595.4 113.3 597.5 122.5" stroke="#cccccc" stroke-width="2"/><path d="M588.8 165.3 591 168.5 593.2 171.8M593.2 142.8 595.4 149.4 597.5 155.9 599.7 162.5M593.2 123.5 595.4 131.3" stroke="#cccccc" stroke-width="2.5"/><path d="M588.8 175.9 591 178.7M595.4 167.4 597.5 172.6 599.7 177.9" stroke="#cccccc" stroke-width="3"/><path d="M593.2 162.1 595.4 167.4M588.8 112.2 591 117.8 593.2 123.5" stroke="#cccccc" stroke-width="3.5"/><path d="M588.8 133.4 591 138.1 593.2 142.8" stroke="#cccccc" stroke-width="4"/><path d="M591 158.4 593.2 162.1" stroke="#cccccc" stroke-width="4.5"/><path d="M588.8 154.6 591 158.4" stroke="#cccccc" stroke-width="5"/><path d="M595.4 176.4 597.5 181 599.7 185.6" stroke="#d2d2d2" stroke-width="1.5"/><path d="M593.2 181.5 595.4 185.4M604 175.6 606.2 182.1" stroke="#d2d2d2" stroke-width="2"/><path d="M599.7 177.9 601.9 183.1" stroke="#d2d2d2" stroke-width="2.5"/><path d="M591 178.7 593.2 181.5" stroke="#d2d2d2" stroke-width="3"/><path d="M599.7 185.6 601.9 190.2" stroke="#d9d9d9" stroke-width="1.5"/><path d="M595.4 185.4 597.5 189.3M604 188.4 606.2 193.6" stroke="#d9d9d9" stroke-width="2"/><path d="M601.9 183.1 604 188.4" stroke="#d9d9d9" stroke-width="2.5"/><path d="M588.8 186.5 591 188.8 593.2 191.1" stroke="#d9d9d9" stroke-width="3"/><path d="M601.9 190.2 604 194.8 606.2 199.3" stroke="#dfdfdf" stroke-width="1.5"/><path d="M597.5 189.3 599.7 193.3 601.9 197.2" stroke="#dfdfdf" stroke-width="2"/><path d="M595.4 194.4 597.5 197.7" stroke="#dfdfdf" stroke-width="2.5"/><path d="M593.2 191.1 595.4 194.4" stroke="#dfdfdf" stroke-width="3"/><path d="M601.9 197.2 604 201.1" stroke="#e6e6e6" stroke-width="2"/><path d="M597.5 197.7 599.7 201 601.9 204.3" stroke="#e6e6e6" stroke-width="2.5"/><path d="M593.2 200.8 595.4 203.4" stroke="#e6e6e6" stroke-width="3.5"/><path d="M591 198.9 593.2 200.8" stroke="#e6e6e6" stroke-width="4"/><path d="M588.8 197.1 591 198.9" stroke="#e6e6e6" stroke-width="4.5"/><path d="M604 201.1 606.2 205.1" stroke="#ececec" stroke-width="1.5"/><path d="M601.9 204.3 604 207.5 606.2 210.8" stroke="#ececec" stroke-width="2"/><path d="M595.4 203.4 597.5 206.1 599.7 208.7" stroke="#ececec" stroke-width="3"/><path d="M588.8 207.7 591 209.1" stroke="#ececec" stroke-width="5"/><path d="M604 213.9 606.2 216.6" stroke="#f2f2f2" stroke-width="2"/><path d="M599.7 208.7 601.9 211.3 604 213.9" stroke="#f2f2f2" stroke-width="2.5"/><path d="M599.7 216.4 601.9 218.4 604 220.3" stroke="#f2f2f2" stroke-width="3"/><path d="M601.9 232.5 604 233.1 606.2 233.8M595.4 212.5 597.5 214.4 599.7 216.4" stroke="#f2f2f2" stroke-width="3.5"/><path d="M593.2 210.5 595.4 212.5" stroke="#f2f2f2" stroke-width="4"/><path d="M591 209.1 593.2 210.5" stroke="#f2f2f2" stroke-width="4.5"/><path d="M591 219.2 593.2 220.2" stroke="#f2f2f2" stroke-width="5"/><path d="M588.8 218.3 591 219.2" stroke="#f2f2f2" stroke-width="5.5"/><path d="M604 220.3 606.2 222.3" stroke="#f9f9f9" stroke-width="2.5"/><path d="M601.9 225.4 604 226.7 606.2 228" stroke="#f9f9f9" stroke-width="3"/><path d="M599.7 224.1 601.9 225.4" stroke="#f9f9f9" stroke-width="3.5"/><path d="M599.7 231.8 601.9 232.5M595.4 221.5 597.5 222.8 599.7 224.1" stroke="#f9f9f9" stroke-width="4"/><path d="M595.4 230.5 597.5 231.1 599.7 231.8M593.2 220.2 595.4 221.5" stroke="#f9f9f9" stroke-width="4.5"/><path d="M593.2 229.8 595.4 230.5" stroke="#f9f9f9" stroke-width="5"/><path d="M588.8 228.9 591 229.4 593.2 229.8" stroke="#f9f9f9" stroke-width="5.5"/></g><clipPath id="sc3"><rect x="607" y="21.5" width="17" height="218"/></clipPath><g clip-path="url(#sc3)" fill="none" stroke-linejoin="round"><path d="M610.6 55.9 613 69.3" stroke="#858585" stroke-width="3.5"/><path d="M605.7 58 608.2 67.2" stroke="#858585" stroke-width="6"/><path d="M617.9 64.3 620.3 80.6" stroke="#8a8a8a" stroke-width="2.5"/><path d="M615.5 65.3 617.9 80.2" stroke="#8a8a8a" stroke-width="3"/><path d="M608.2 67.2 610.6 76.3" stroke="#8a8a8a" stroke-width="5.5"/><path d="M622.8 71.1 625.2 90.5" stroke="#8f8f8f" stroke-width="1.5"/><path d="M613 69.3 615.5 82.7" stroke="#8f8f8f" stroke-width="3.5"/><path d="M610.6 76.3 613 88.2" stroke="#8f8f8f" stroke-width="4"/><path d="M620.3 80.6 622.8 97" stroke="#949494" stroke-width="2"/><path d="M617.9 80.2 620.3 95.1" stroke="#949494" stroke-width="2.5"/><path d="M615.5 82.7 617.9 96.1" stroke="#949494" stroke-width="3"/><path d="M605.7 80.7 608.2 88.7" stroke="#949494" stroke-width="6.5"/><path d="M622.8 84.1 625.2 101.9" stroke="#999999" stroke-width="2"/><path d="M613 88.2 615.5 100.2" stroke="#999999" stroke-width="4"/><path d="M608.2 88.7 610.6 96.7" stroke="#999999" stroke-width="6.5"/><path d="M620.3 95.1 622.8 110" stroke="#9e9e9e" stroke-width="2.5"/><path d="M622.8 148.8 625.2 159.3M617.9 96.1 620.3 109.5" stroke="#9e9e9e" stroke-width="3"/><path d="M622.8 161.8 625.2 170.7" stroke="#9e9e9e" stroke-width="3.5"/><path d="M622.8 174.7 625.2 182.2M617.9 143.9 620.3 152.9 622.8 161.8" stroke="#9e9e9e" stroke-width="4"/><path d="M620.3 167.3 622.8 174.7M610.6 96.7 613 107.1" stroke="#9e9e9e" stroke-width="4.5"/><path d="M610.6 178.3 613 182.8M617.9 159.9 620.3 167.3" stroke="#9e9e9e" stroke-width="5"/><path d="M620.3 181.7 622.8 187.7M615.5 152.4 617.9 159.9" stroke="#9e9e9e" stroke-width="5.5"/><path d="M617.9 175.8 620.3 181.7M613 145 615.5 152.4" stroke="#9e9e9e" stroke-width="6"/><path d="M608.2 174.9 610.6 178.3M615.5 169.8 617.9 175.8" stroke="#9e9e9e" stroke-width="6.5"/><path d="M605.7 171.4 608.2 174.9M613 163.9 615.5 169.8" stroke="#9e9e9e" stroke-width="7"/><path d="M605.7 182.8 608.2 185.6M610.6 157.9 613 163.9" stroke="#9e9e9e" stroke-width="7.5"/><path d="M608.2 153.3 610.6 157.9" stroke="#9e9e9e" stroke-width="10"/><path d="M605.7 148.7 608.2 153.3" stroke="#9e9e9e" stroke-width="10.5"/><path d="M622.8 97 625.2 113.4" stroke="#a3a3a3" stroke-width="2"/><path d="M622.8 135.9 625.2 147.8" stroke="#a3a3a3" stroke-width="2.5"/><path d="M620.3 138.4 622.8 148.8M615.5 100.2 617.9 112.1" stroke="#a3a3a3" stroke-width="3.5"/><path d="M613 182.8 615.5 187.2 617.9 191.7M615.5 135 617.9 143.9M613 107.1 615.5 117.6" stroke="#a3a3a3" stroke-width="4.5"/><path d="M622.8 187.7 625.2 193.6" stroke="#a3a3a3" stroke-width="5"/><path d="M610.6 188.5 613 192.2" stroke="#a3a3a3" stroke-width="6"/><path d="M610.6 137.5 613 145" stroke="#a3a3a3" stroke-width="6.5"/><path d="M608.2 185.6 610.6 188.5M605.7 103.4 608.2 110.2 610.6 117.1" stroke="#a3a3a3" stroke-width="7.5"/><path d="M622.8 110 625.2 124.9" stroke="#a8a8a8" stroke-width="2"/><path d="M620.3 109.5 622.8 122.9 625.2 136.3" stroke="#a8a8a8" stroke-width="2.5"/><path d="M617.9 112.1 620.3 124 622.8 135.9" stroke="#a8a8a8" stroke-width="3"/><path d="M617.9 128 620.3 138.4" stroke="#a8a8a8" stroke-width="3.5"/><path d="M617.9 191.7 620.3 196.2M615.5 117.6 617.9 128" stroke="#a8a8a8" stroke-width="4"/><path d="M613 126.1 615.5 135" stroke="#a8a8a8" stroke-width="5"/><path d="M613 192.2 615.5 196M610.6 117.1 613 126.1" stroke="#a8a8a8" stroke-width="5.5"/><path d="M608.2 196.4 610.6 198.7" stroke="#a8a8a8" stroke-width="8"/><path d="M605.7 194.1 608.2 196.4M608.2 131.8 610.6 137.5" stroke="#a8a8a8" stroke-width="8.5"/><path d="M605.7 126 608.2 131.8" stroke="#a8a8a8" stroke-width="9"/><path d="M620.3 196.2 622.8 200.6" stroke="#adadad" stroke-width="3.5"/><path d="M615.5 196 617.9 199.7" stroke="#adadad" stroke-width="5"/><path d="M610.6 198.7 613 201.7" stroke="#adadad" stroke-width="6.5"/><path d="M622.8 200.6 625.2 205.1" stroke="#b2b2b2" stroke-width="3.5"/><path d="M617.9 199.7 620.3 203.4" stroke="#b2b2b2" stroke-width="4.5"/><path d="M613 201.7 615.5 204.7" stroke="#b2b2b2" stroke-width="6.5"/><path d="M620.3 203.4 622.8 207.1 625.2 210.8" stroke="#b8b8b8" stroke-width="4"/><path d="M617.9 207.6 620.3 210.6" stroke="#b8b8b8" stroke-width="5.5"/><path d="M615.5 204.7 617.9 207.6" stroke="#b8b8b8" stroke-width="6"/><path d="M608.2 207.2 610.6 208.9" stroke="#b8b8b8" stroke-width="9"/><path d="M605.7 205.5 608.2 207.2" stroke="#b8b8b8" stroke-width="9.5"/><path d="M620.3 210.6 622.8 213.6" stroke="#bdbdbd" stroke-width="5"/><path d="M615.5 213.4 617.9 215.6" stroke="#bdbdbd" stroke-width="6.5"/><path d="M613 211.1 615.5 213.4" stroke="#bdbdbd" stroke-width="7.5"/><path d="M610.6 208.9 613 211.1" stroke="#bdbdbd" stroke-width="8"/><path d="M622.8 213.6 625.2 216.6" stroke="#c2c2c2" stroke-width="4.5"/><path d="M620.3 217.8 622.8 220.1" stroke="#c2c2c2" stroke-width="5.5"/><path d="M617.9 215.6 620.3 217.8" stroke="#c2c2c2" stroke-width="6"/><path d="M610.6 219.1 613 220.6" stroke="#c2c2c2" stroke-width="9"/><path d="M608.2 218 610.6 219.1" stroke="#c2c2c2" stroke-width="10"/><path d="M605.7 216.8 608.2 218" stroke="#c2c2c2" stroke-width="10.5"/><path d="M622.8 220.1 625.2 222.3" stroke="#c7c7c7" stroke-width="5"/><path d="M620.3 225.1 622.8 226.5" stroke="#c7c7c7" stroke-width="6.5"/><path d="M617.9 223.6 620.3 225.1" stroke="#c7c7c7" stroke-width="7"/><path d="M615.5 222.1 617.9 223.6" stroke="#c7c7c7" stroke-width="8"/><path d="M613 220.6 615.5 222.1" stroke="#c7c7c7" stroke-width="8.5"/><path d="M622.8 226.5 625.2 228" stroke="#cccccc" stroke-width="6"/><path d="M615.5 230.8 617.9 231.5" stroke="#cccccc" stroke-width="8.5"/><path d="M613 230 615.5 230.8" stroke="#cccccc" stroke-width="9.5"/><path d="M610.6 229.3 613 230" stroke="#cccccc" stroke-width="10"/><path d="M608.2 228.7 610.6 229.3" stroke="#cccccc" stroke-width="11"/><path d="M605.7 228.2 608.2 228.7" stroke="#cccccc" stroke-width="11.5"/><path d="M622.8 233 625.2 233.8" stroke="#d1d1d1" stroke-width="6.5"/><path d="M620.3 232.3 622.8 233" stroke="#d1d1d1" stroke-width="7.5"/><path d="M617.9 231.5 620.3 232.3" stroke="#d1d1d1" stroke-width="8"/><path d="M617.9 64.3 620.3 80.6M622.8 71.1 625.2 90.5" stroke="#939393" stroke-width="1.2"/><path d="M610.6 55.9 613 69.3" stroke="#939393" stroke-width="1.5"/><path d="M615.5 65.3 617.9 80.2" stroke="#999999" stroke-width="1.2"/><path d="M605.7 58 608.2 67.2" stroke="#999999" stroke-width="2.5"/><path d="M613 69.3 615.5 82.7" stroke="#a6a6a6" stroke-width="1.5"/><path d="M608.2 67.2 610.6 76.3" stroke="#a6a6a6" stroke-width="2.5"/><path d="M620.3 80.6 622.8 97M622.8 84.1 625.2 101.9" stroke="#acacac" stroke-width="1.2"/><path d="M617.9 80.2 620.3 95.1" stroke="#b2b2b2" stroke-width="1.2"/><path d="M610.6 76.3 613 88.2" stroke="#b9b9b9" stroke-width="2"/><path d="M615.5 82.7 617.9 96.1" stroke="#bfbfbf" stroke-width="1.5"/><path d="M605.7 80.7 608.2 88.7" stroke="#c6c6c6" stroke-width="3"/><path d="M620.3 95.1 622.8 110M622.8 97 625.2 113.4" stroke="#cccccc" stroke-width="1.2"/><path d="M617.9 96.1 620.3 109.5" stroke="#d2d2d2" stroke-width="1.2"/><path d="M622.8 174.7 625.2 182.2M620.3 152.9 622.8 161.8 625.2 170.7M622.8 148.8 625.2 159.3M613 88.2 615.5 100.2" stroke="#d2d2d2" stroke-width="1.5"/><path d="M610.6 178.3 613 182.8M617.9 159.9 620.3 167.3 622.8 174.7" stroke="#d2d2d2" stroke-width="2"/><path d="M617.9 175.8 620.3 181.7M615.5 152.4 617.9 159.9" stroke="#d2d2d2" stroke-width="2.5"/><path d="M605.7 171.4 608.2 174.9 610.6 178.3M613 163.9 615.5 169.8 617.9 175.8M608.2 88.7 610.6 96.7" stroke="#d2d2d2" stroke-width="3"/><path d="M610.6 157.9 613 163.9" stroke="#d2d2d2" stroke-width="3.5"/><path d="M608.2 153.3 610.6 157.9" stroke="#d2d2d2" stroke-width="4.5"/><path d="M613 182.8 615.5 187.2 617.9 191.7M622.8 187.7 625.2 193.6M617.9 143.9 620.3 152.9" stroke="#d9d9d9" stroke-width="2"/><path d="M610.6 188.5 613 192.2M620.3 181.7 622.8 187.7M613 145 615.5 152.4" stroke="#d9d9d9" stroke-width="2.5"/><path d="M608.2 185.6 610.6 188.5" stroke="#d9d9d9" stroke-width="3"/><path d="M605.7 182.8 608.2 185.6" stroke="#d9d9d9" stroke-width="3.5"/><path d="M605.7 148.7 608.2 153.3" stroke="#d9d9d9" stroke-width="5"/><path d="M615.5 100.2 617.9 112.1" stroke="#dfdfdf" stroke-width="1.5"/><path d="M617.9 191.7 620.3 196.2M610.6 96.7 613 107.1" stroke="#dfdfdf" stroke-width="2"/><path d="M613 192.2 615.5 196" stroke="#dfdfdf" stroke-width="3"/><path d="M605.7 194.1 608.2 196.4" stroke="#dfdfdf" stroke-width="4.5"/><path d="M622.8 135.9 625.2 147.8M620.3 109.5 622.8 122.9M622.8 110 625.2 124.9" stroke="#e6e6e6" stroke-width="1.2"/><path d="M622.8 200.6 625.2 205.1M620.3 138.4 622.8 148.8" stroke="#e6e6e6" stroke-width="1.5"/><path d="M620.3 196.2 622.8 200.6M615.5 135 617.9 143.9M613 107.1 615.5 117.6" stroke="#e6e6e6" stroke-width="2"/><path d="M615.5 196 617.9 199.7 620.3 203.4" stroke="#e6e6e6" stroke-width="2.5"/><path d="M610.6 137.5 613 145" stroke="#e6e6e6" stroke-width="3"/><path d="M610.6 198.7 613 201.7" stroke="#e6e6e6" stroke-width="3.5"/><path d="M608.2 131.8 610.6 137.5" stroke="#e6e6e6" stroke-width="4"/><path d="M608.2 196.4 610.6 198.7" stroke="#e6e6e6" stroke-width="4.5"/><path d="M622.8 122.9 625.2 136.3" stroke="#ececec" stroke-width="1.2"/><path d="M615.5 117.6 617.9 128 620.3 138.4M617.9 112.1 620.3 124 622.8 135.9" stroke="#ececec" stroke-width="1.5"/><path d="M620.3 203.4 622.8 207.1 625.2 210.8M613 126.1 615.5 135" stroke="#ececec" stroke-width="2"/><path d="M617.9 207.6 620.3 210.6M610.6 117.1 613 126.1" stroke="#ececec" stroke-width="2.5"/><path d="M613 201.7 615.5 204.7 617.9 207.6M608.2 110.2 610.6 117.1" stroke="#ececec" stroke-width="3"/><path d="M605.7 103.4 608.2 110.2" stroke="#ececec" stroke-width="3.5"/><path d="M605.7 126 608.2 131.8" stroke="#ececec" stroke-width="4"/><path d="M605.7 205.5 608.2 207.2 610.6 208.9" stroke="#ececec" stroke-width="5"/><path d="M622.8 213.6 625.2 216.6" stroke="#f2f2f2" stroke-width="2"/><path d="M620.3 210.6 622.8 213.6" stroke="#f2f2f2" stroke-width="2.5"/><path d="M617.9 215.6 620.3 217.8 622.8 220.1" stroke="#f2f2f2" stroke-width="3"/><path d="M622.8 233 625.2 233.8M613 211.1 615.5 213.4 617.9 215.6" stroke="#f2f2f2" stroke-width="3.5"/><path d="M610.6 208.9 613 211.1" stroke="#f2f2f2" stroke-width="4"/><path d="M610.6 219.1 613 220.6" stroke="#f2f2f2" stroke-width="4.5"/><path d="M605.7 216.8 608.2 218 610.6 219.1" stroke="#f2f2f2" stroke-width="5.5"/><path d="M622.8 220.1 625.2 222.3" stroke="#f9f9f9" stroke-width="2.5"/><path d="M622.8 226.5 625.2 228" stroke="#f9f9f9" stroke-width="3"/><path d="M620.3 232.3 622.8 233M617.9 223.6 620.3 225.1 622.8 226.5" stroke="#f9f9f9" stroke-width="3.5"/><path d="M617.9 231.5 620.3 232.3M615.5 222.1 617.9 223.6" stroke="#f9f9f9" stroke-width="4"/><path d="M615.5 230.8 617.9 231.5M613 220.6 615.5 222.1" stroke="#f9f9f9" stroke-width="4.5"/><path d="M613 230 615.5 230.8" stroke="#f9f9f9" stroke-width="5"/><path d="M608.2 228.7 610.6 229.3 613 230" stroke="#f9f9f9" stroke-width="5.5"/><path d="M605.7 228.2 608.2 228.7" stroke="#f9f9f9" stroke-width="6"/></g><clipPath id="sc4"><rect x="627" y="21.5" width="31" height="218"/></clipPath><g clip-path="url(#sc4)" fill="none" stroke-linejoin="round"><path d="M633 94.4 635.4 95.6 637.7 96.9 640.1 98.1 642.5 99.4" stroke="#8a8a8a" stroke-width="8.5"/><path d="M625.8 95.1 628.2 94.1 630.6 93.1 633 94.4M625.8 86.1 628.2 85 630.6 84" stroke="#8a8a8a" stroke-width="9"/><path d="M656.9 130 659.2 132.3M652.1 117.3 654.5 119.8 656.9 122.2" stroke="#8f8f8f" stroke-width="6"/><path d="M649.7 131.5 652.1 133.6 654.5 135.7 656.9 137.9 659.2 140M647.3 120.9 649.7 123.2 652.1 125.5 654.5 127.7 656.9 130M644.9 110 647.3 112.4 649.7 114.9 652.1 117.3" stroke="#8f8f8f" stroke-width="6.5"/><path d="M644.9 127.2 647.3 129.4 649.7 131.5M644.9 118.6 647.3 120.9" stroke="#8f8f8f" stroke-width="7"/><path d="M642.5 116.9 644.9 118.6M642.5 108.1 644.9 110" stroke="#8f8f8f" stroke-width="7.5"/><path d="M642.5 125.7 644.9 127.2" stroke="#8f8f8f" stroke-width="8"/><path d="M640.1 115.8 642.5 116.9M637.7 105.8 640.1 107 642.5 108.1" stroke="#8f8f8f" stroke-width="8.5"/><path d="M625.8 104.1 628.2 103.2M630.6 102.3 633 103.5 635.4 104.6 637.7 105.8" stroke="#8f8f8f" stroke-width="9"/><path d="M628.2 103.2 630.6 102.3" stroke="#8f8f8f" stroke-width="9.5"/><path d="M654.5 143.7 656.9 145.7 659.2 147.6" stroke="#949494" stroke-width="6.5"/><path d="M644.9 135.9 647.3 137.8 649.7 139.8 652.1 141.8 654.5 143.7" stroke="#949494" stroke-width="7"/><path d="M644.9 144.5 647.3 146.3" stroke="#949494" stroke-width="7.5"/><path d="M642.5 134.4 644.9 135.9" stroke="#949494" stroke-width="8"/><path d="M642.5 143.2 644.9 144.5" stroke="#949494" stroke-width="8.5"/><path d="M640.1 133.5 642.5 134.4M637.7 123.6 640.1 124.6 642.5 125.7M630.6 111.4 633 112.5 635.4 113.6 637.7 114.7 640.1 115.8" stroke="#949494" stroke-width="9"/><path d="M628.2 112.3 630.6 111.4" stroke="#949494" stroke-width="9.5"/><path d="M649.7 148.1 652.1 149.9 654.5 151.7 656.9 153.5 659.2 155.3" stroke="#999999" stroke-width="7"/><path d="M647.3 146.3 649.7 148.1" stroke="#999999" stroke-width="7.5"/><path d="M637.7 141.5 640.1 142.3 642.5 143.2M637.7 132.5 640.1 133.5M633 121.6 635.4 122.6 637.7 123.6" stroke="#999999" stroke-width="9"/><path d="M625.8 113.2 628.2 112.3" stroke="#999999" stroke-width="9.5"/><path d="M644.9 153.1 647.3 154.8 649.7 156.4 652.1 158" stroke="#9e9e9e" stroke-width="7.5"/><path d="M642.5 151.9 644.9 153.1" stroke="#9e9e9e" stroke-width="8.5"/><path d="M637.7 150.4 640.1 151.1 642.5 151.9M635.4 140.6 637.7 141.5M630.6 129.7 633 130.7 635.4 131.6 637.7 132.5M630.6 120.6 633 121.6" stroke="#9e9e9e" stroke-width="9"/><path d="M625.8 149.3 628.2 148.6 630.6 148 633 148.8 635.4 149.6 637.7 150.4M630.6 138.9 633 139.7 635.4 140.6M625.8 122.2 628.2 121.4 630.6 120.6" stroke="#9e9e9e" stroke-width="9.5"/><path d="M654.5 159.7 656.9 161.3" stroke="#a3a3a3" stroke-width="7"/><path d="M652.1 158 654.5 159.7" stroke="#a3a3a3" stroke-width="7.5"/><path d="M640.1 160 642.5 160.7" stroke="#a3a3a3" stroke-width="9"/><path d="M625.8 158.3 628.2 157.7 630.6 157.2 633 157.9 635.4 158.6 637.7 159.3 640.1 160M625.8 140.2 628.2 139.6 630.6 138.9M625.8 131.2 628.2 130.5 630.6 129.7" stroke="#a3a3a3" stroke-width="9.5"/><path d="M656.9 161.3 659.2 162.9" stroke="#a8a8a8" stroke-width="7"/><path d="M649.7 164.7 652.1 166.2 654.5 167.7 656.9 169.1 659.2 170.6" stroke="#a8a8a8" stroke-width="7.5"/><path d="M644.9 170.4 647.3 171.7 649.7 173 652.1 174.3M644.9 161.8 647.3 163.2 649.7 164.7" stroke="#a8a8a8" stroke-width="8"/><path d="M642.5 160.7 644.9 161.8" stroke="#a8a8a8" stroke-width="8.5"/><path d="M642.5 169.4 644.9 170.4" stroke="#a8a8a8" stroke-width="9"/><path d="M625.8 167.3 628.2 166.8 630.6 166.3 633 166.9 635.4 167.6 637.7 168.2 640.1 168.8 642.5 169.4" stroke="#a8a8a8" stroke-width="9.5"/><path d="M656.9 184.8 659.2 185.9M654.5 175.6 656.9 176.9 659.2 178.3" stroke="#adadad" stroke-width="7.5"/><path d="M649.7 181.3 652.1 182.5 654.5 183.6 656.9 184.8M652.1 174.3 654.5 175.6" stroke="#adadad" stroke-width="8"/><path d="M644.9 187.7 647.3 188.7 649.7 189.6 652.1 190.6M644.9 179.1 647.3 180.2 649.7 181.3" stroke="#adadad" stroke-width="8.5"/><path d="M642.5 187 644.9 187.7M642.5 178.2 644.9 179.1" stroke="#adadad" stroke-width="9"/><path d="M625.8 185.4 628.2 185M630.6 184.6 633 185.1 635.4 185.6 637.7 186 640.1 186.5 642.5 187M625.8 176.3 628.2 175.9M630.6 175.5 633 176 635.4 176.6 637.7 177.1 640.1 177.7 642.5 178.2" stroke="#adadad" stroke-width="9.5"/><path d="M628.2 185 630.6 184.6M628.2 175.9 630.6 175.5" stroke="#adadad" stroke-width="10"/><path d="M652.1 190.6 654.5 191.6 656.9 192.6 659.2 193.6" stroke="#b2b2b2" stroke-width="8"/><path d="M647.3 197.1 649.7 198 652.1 198.8" stroke="#b2b2b2" stroke-width="8.5"/><path d="M642.5 195.7 644.9 196.3 647.3 197.1" stroke="#b2b2b2" stroke-width="9"/><path d="M633 194.2 635.4 194.5 637.7 194.9 640.1 195.3 642.5 195.7" stroke="#b2b2b2" stroke-width="9.5"/><path d="M625.8 194.4 628.2 194.1 630.6 193.8 633 194.2" stroke="#b2b2b2" stroke-width="10"/><path d="M654.5 199.6 656.9 200.4 659.2 201.2" stroke="#b8b8b8" stroke-width="8"/><path d="M652.1 198.8 654.5 199.6" stroke="#b8b8b8" stroke-width="8.5"/><path d="M633 203.2 635.4 203.5 637.7 203.8 640.1 204.2" stroke="#b8b8b8" stroke-width="9.5"/><path d="M625.8 203.4 628.2 203.2 630.6 202.9 633 203.2" stroke="#b8b8b8" stroke-width="10"/><path d="M656.9 208.2 659.2 208.9" stroke="#bdbdbd" stroke-width="8"/><path d="M649.7 206.3 652.1 206.9 654.5 207.6 656.9 208.2" stroke="#bdbdbd" stroke-width="8.5"/><path d="M644.9 205 647.3 205.6 649.7 206.3" stroke="#bdbdbd" stroke-width="9"/><path d="M640.1 204.2 642.5 204.5 644.9 205" stroke="#bdbdbd" stroke-width="9.5"/><path d="M652.1 215.1 654.5 215.6 656.9 216 659.2 216.5" stroke="#c2c2c2" stroke-width="8.5"/><path d="M644.9 213.6 647.3 214.1 649.7 214.6 652.1 215.1" stroke="#c2c2c2" stroke-width="9"/><path d="M635.4 212.5 637.7 212.8 640.1 213 642.5 213.2 644.9 213.6" stroke="#c2c2c2" stroke-width="9.5"/><path d="M625.8 212.4 628.2 212.2 630.6 212.1 633 212.3 635.4 212.5" stroke="#c2c2c2" stroke-width="10"/><path d="M654.5 223.5 656.9 223.9 659.2 224.2" stroke="#c7c7c7" stroke-width="8.5"/><path d="M647.3 222.6 649.7 222.9 652.1 223.2 654.5 223.5" stroke="#c7c7c7" stroke-width="9"/><path d="M635.4 221.5 637.7 221.7 640.1 221.8 642.5 222 644.9 222.2 647.3 222.6" stroke="#c7c7c7" stroke-width="9.5"/><path d="M625.8 221.5 628.2 221.3 630.6 221.2 633 221.4 635.4 221.5" stroke="#c7c7c7" stroke-width="10"/><path d="M647.3 231 649.7 231.2 652.1 231.4" stroke="#cccccc" stroke-width="9"/><path d="M635.4 230.5 637.7 230.6 640.1 230.7 642.5 230.7 644.9 230.9 647.3 231" stroke="#cccccc" stroke-width="9.5"/><path d="M625.8 230.5 628.2 230.4 630.6 230.4 633 230.4 635.4 230.5" stroke="#cccccc" stroke-width="10"/><path d="M654.5 231.5 656.9 231.7 659.2 231.8" stroke="#d1d1d1" stroke-width="8.5"/><path d="M652.1 231.4 654.5 231.5" stroke="#d1d1d1" stroke-width="9"/><path d="M635.4 95.6 637.7 96.9 640.1 98.1 642.5 99.4" stroke="#939393" stroke-width="3.5"/><path d="M628.2 85 630.6 84" stroke="#939393" stroke-width="4"/><path d="M656.9 130 659.2 132.3M644.9 110 647.3 112.4 649.7 114.9M654.5 119.8 656.9 122.2" stroke="#999999" stroke-width="2.5"/><path d="M642.5 108.1 644.9 110" stroke="#999999" stroke-width="3"/><path d="M630.6 93.1 633 94.4 635.4 95.6" stroke="#999999" stroke-width="3.5"/><path d="M625.8 86.1 628.2 85" stroke="#999999" stroke-width="4"/><path d="M656.9 137.9 659.2 140M654.5 127.7 656.9 130M649.7 114.9 652.1 117.3 654.5 119.8" stroke="#9f9f9f" stroke-width="2.5"/><path d="M637.7 105.8 640.1 107 642.5 108.1" stroke="#9f9f9f" stroke-width="3.5"/><path d="M628.2 94.1 630.6 93.1" stroke="#9f9f9f" stroke-width="4"/><path d="M654.5 135.7 656.9 137.9M649.7 123.2 652.1 125.5 654.5 127.7" stroke="#a6a6a6" stroke-width="2.5"/><path d="M633 103.5 635.4 104.6 637.7 105.8" stroke="#a6a6a6" stroke-width="3.5"/><path d="M630.6 102.3 633 103.5M625.8 95.1 628.2 94.1" stroke="#a6a6a6" stroke-width="4"/><path d="M649.7 131.5 652.1 133.6 654.5 135.7M644.9 118.6 647.3 120.9 649.7 123.2" stroke="#acacac" stroke-width="3"/><path d="M640.1 115.8 642.5 116.9 644.9 118.6" stroke="#acacac" stroke-width="3.5"/><path d="M628.2 103.2 630.6 102.3" stroke="#acacac" stroke-width="4"/><path d="M647.3 137.8 649.7 139.8 652.1 141.8 654.5 143.7 656.9 145.7 659.2 147.6M644.9 127.2 647.3 129.4 649.7 131.5" stroke="#b2b2b2" stroke-width="3"/><path d="M642.5 125.7 644.9 127.2M637.7 114.7 640.1 115.8" stroke="#b2b2b2" stroke-width="3.5"/><path d="M625.8 104.1 628.2 103.2" stroke="#b2b2b2" stroke-width="4"/><path d="M644.9 135.9 647.3 137.8" stroke="#b9b9b9" stroke-width="3"/><path d="M642.5 134.4 644.9 135.9M640.1 124.6 642.5 125.7M635.4 113.6 637.7 114.7" stroke="#b9b9b9" stroke-width="3.5"/><path d="M630.6 111.4 633 112.5 635.4 113.6" stroke="#b9b9b9" stroke-width="4"/><path d="M644.9 144.5 647.3 146.3" stroke="#bfbfbf" stroke-width="3"/><path d="M642.5 143.2 644.9 144.5" stroke="#bfbfbf" stroke-width="3.5"/><path d="M637.7 132.5 640.1 133.5 642.5 134.4M637.7 123.6 640.1 124.6M628.2 112.3 630.6 111.4" stroke="#bfbfbf" stroke-width="4"/><path d="M647.3 146.3 649.7 148.1 652.1 149.9 654.5 151.7 656.9 153.5 659.2 155.3" stroke="#c6c6c6" stroke-width="3"/><path d="M637.7 141.5 640.1 142.3 642.5 143.2M635.4 131.6 637.7 132.5M635.4 122.6 637.7 123.6M625.8 113.2 628.2 112.3" stroke="#c6c6c6" stroke-width="4"/><path d="M635.4 140.6 637.7 141.5M633 130.7 635.4 131.6M628.2 121.4 630.6 120.6 633 121.6 635.4 122.6" stroke="#cccccc" stroke-width="4"/><path d="M644.9 153.1 647.3 154.8 649.7 156.4 652.1 158 654.5 159.7 656.9 161.3 659.2 162.9" stroke="#d2d2d2" stroke-width="3"/><path d="M642.5 160.7 644.9 161.8M642.5 151.9 644.9 153.1" stroke="#d2d2d2" stroke-width="3.5"/><path d="M637.7 159.3 640.1 160 642.5 160.7M630.6 148 633 148.8 635.4 149.6 637.7 150.4 640.1 151.1 642.5 151.9M628.2 139.6 630.6 138.9 633 139.7 635.4 140.6M628.2 130.5 630.6 129.7 633 130.7M625.8 122.2 628.2 121.4" stroke="#d2d2d2" stroke-width="4"/><path d="M649.7 164.7 652.1 166.2 654.5 167.7 656.9 169.1 659.2 170.6" stroke="#d9d9d9" stroke-width="3"/><path d="M642.5 169.4 644.9 170.4 647.3 171.7 649.7 173 652.1 174.3 654.5 175.6M644.9 161.8 647.3 163.2 649.7 164.7" stroke="#d9d9d9" stroke-width="3.5"/><path d="M625.8 167.3 628.2 166.8 630.6 166.3 633 166.9 635.4 167.6 637.7 168.2 640.1 168.8 642.5 169.4M625.8 158.3 628.2 157.7 630.6 157.2 633 157.9 635.4 158.6 637.7 159.3M625.8 149.3 628.2 148.6 630.6 148M625.8 140.2 628.2 139.6M625.8 131.2 628.2 130.5" stroke="#d9d9d9" stroke-width="4"/><path d="M656.9 184.8 659.2 185.9M654.5 175.6 656.9 176.9 659.2 178.3" stroke="#dfdfdf" stroke-width="3"/><path d="M644.9 187.7 647.3 188.7M644.9 179.1 647.3 180.2 649.7 181.3 652.1 182.5 654.5 183.6 656.9 184.8" stroke="#dfdfdf" stroke-width="3.5"/><path d="M625.8 185.4 628.2 185 630.6 184.6 633 185.1 635.4 185.6 637.7 186 640.1 186.5 642.5 187 644.9 187.7M625.8 176.3 628.2 175.9 630.6 175.5 633 176 635.4 176.6 637.7 177.1 640.1 177.7 642.5 178.2 644.9 179.1" stroke="#dfdfdf" stroke-width="4"/><path d="M647.3 188.7 649.7 189.6 652.1 190.6 654.5 191.6" stroke="#e6e6e6" stroke-width="3.5"/><path d="M654.5 191.6 656.9 192.6 659.2 193.6" stroke="#e6e6e6" stroke-width="4"/><path d="M642.5 195.7 644.9 196.3 647.3 197.1 649.7 198 652.1 198.8 654.5 199.6" stroke="#e6e6e6" stroke-width="4.5"/><path d="M625.8 194.4 628.2 194.1 630.6 193.8 633 194.2 635.4 194.5 637.7 194.9 640.1 195.3 642.5 195.7" stroke="#e6e6e6" stroke-width="5"/><path d="M654.5 199.6 656.9 200.4 659.2 201.2" stroke="#ececec" stroke-width="4"/><path d="M644.9 205 647.3 205.6 649.7 206.3" stroke="#ececec" stroke-width="4.5"/><path d="M625.8 203.4 628.2 203.2 630.6 202.9 633 203.2 635.4 203.5 637.7 203.8 640.1 204.2 642.5 204.5 644.9 205" stroke="#ececec" stroke-width="5"/><path d="M656.9 216 659.2 216.5M656.9 208.2 659.2 208.9" stroke="#f2f2f2" stroke-width="4"/><path d="M644.9 213.6 647.3 214.1 649.7 214.6 652.1 215.1 654.5 215.6 656.9 216M649.7 206.3 652.1 206.9 654.5 207.6 656.9 208.2" stroke="#f2f2f2" stroke-width="4.5"/><path d="M625.8 212.4 628.2 212.2 630.6 212.1 633 212.3 635.4 212.5 637.7 212.8 640.1 213 642.5 213.2 644.9 213.6" stroke="#f2f2f2" stroke-width="5"/><path d="M647.3 231 649.7 231.2 652.1 231.4 654.5 231.5 656.9 231.7 659.2 231.8M644.9 222.2 647.3 222.6 649.7 222.9 652.1 223.2 654.5 223.5 656.9 223.9 659.2 224.2" stroke="#f9f9f9" stroke-width="4.5"/><path d="M625.8 230.5 628.2 230.4 630.6 230.4 633 230.4 635.4 230.5 637.7 230.6 640.1 230.7 642.5 230.7 644.9 230.9 647.3 231M625.8 221.5 628.2 221.3 630.6 221.2 633 221.4 635.4 221.5 637.7 221.7 640.1 221.8 642.5 222 644.9 222.2" stroke="#f9f9f9" stroke-width="5"/></g></g><rect x="52.5" y="21.5" width="304" height="218" fill="none" stroke="#000" stroke-width="1"/><text x="51.7" y="250.6" text-anchor="middle">0</text><text x="112.5" y="250.6" text-anchor="middle">10000</text><text x="173.3" y="250.6" text-anchor="middle">20000</text><text x="234.1" y="250.6" text-anchor="middle">30000</text><text x="294.9" y="250.6" text-anchor="middle">40000</text><text x="355.7" y="250.6" text-anchor="middle">50000</text><text x="47.2" y="25.2" text-anchor="end">8000</text><text x="47.2" y="50.1" text-anchor="end">6000</text><text x="47.2" y="74.3" text-anchor="end">4000</text><text x="47.2" y="98.6" text-anchor="end">2000</text><text x="47.2" y="122.8" text-anchor="end">0</text><text x="47.2" y="147" text-anchor="end">−2000</text><text x="47.2" y="171.2" text-anchor="end">−4000</text><text x="47.2" y="195.5" text-anchor="end">−6000</text><text x="47.2" y="219.7" text-anchor="end">−8000</text><text x="47.2" y="243.2" text-anchor="end">−10000</text><path d="M52.5 239.5v-3.3M52.5 21.5v3.3M113.3 239.5v-3.3M113.3 21.5v3.3M174.1 239.5v-3.3M174.1 21.5v3.3M234.9 239.5v-3.3M234.9 21.5v3.3M295.7 239.5v-3.3M295.7 21.5v3.3M356.5 239.5v-3.3M356.5 21.5v3.3M52.5 21.5h3.3M356.5 21.5h-3.3M52.5 46.4h3.3M356.5 46.4h-3.3M52.5 70.6h3.3M356.5 70.6h-3.3M52.5 94.9h3.3M356.5 94.9h-3.3M52.5 119.1h3.3M356.5 119.1h-3.3M52.5 143.3h3.3M356.5 143.3h-3.3M52.5 167.5h3.3M356.5 167.5h-3.3M52.5 191.8h3.3M356.5 191.8h-3.3M52.5 216h3.3M356.5 216h-3.3M52.5 239.5h3.3M356.5 239.5h-3.3" stroke="#000" stroke-width="0.8" fill="none"/><text x="204.5" y="16.2" text-anchor="middle" font-size="12.3">Raw audio signal</text><rect x="417.5" y="21.5" width="304" height="218" fill="none" stroke="#000" stroke-width="1"/><text x="416.7" y="250.6" text-anchor="middle">0</text><text x="477.5" y="250.6" text-anchor="middle">5000</text><text x="538.3" y="250.6" text-anchor="middle">10000</text><text x="599.1" y="250.6" text-anchor="middle">15000</text><text x="659.9" y="250.6" text-anchor="middle">20000</text><text x="720.7" y="250.6" text-anchor="middle">25000</text><text x="412.2" y="25.2" text-anchor="end">1.0</text><text x="412.2" y="68.8" text-anchor="end">0.8</text><text x="412.2" y="112.4" text-anchor="end">0.6</text><text x="412.2" y="156" text-anchor="end">0.4</text><text x="412.2" y="199.6" text-anchor="end">0.2</text><text x="412.2" y="243.2" text-anchor="end">0.0</text><path d="M417.5 239.5v-3.3M417.5 21.5v3.3M478.3 239.5v-3.3M478.3 21.5v3.3M539.1 239.5v-3.3M539.1 21.5v3.3M599.9 239.5v-3.3M599.9 21.5v3.3M660.7 239.5v-3.3M660.7 21.5v3.3M721.5 239.5v-3.3M721.5 21.5v3.3M417.5 21.5h3.3M721.5 21.5h-3.3M417.5 65.1h3.3M721.5 65.1h-3.3M417.5 108.7h3.3M721.5 108.7h-3.3M417.5 152.3h3.3M721.5 152.3h-3.3M417.5 195.9h3.3M721.5 195.9h-3.3M417.5 239.5h3.3M721.5 239.5h-3.3" stroke="#000" stroke-width="0.8" fill="none"/><text x="569.5" y="16.2" text-anchor="middle" font-size="12.3">Spectrogram</text></svg>
<div class="abs" style="left:961px;top:103px;width:15px;height:723px;background:#d6d3ce;border-left:1px solid #5a5a5a;border-right:1px solid #7a7a7a"></div><div class="abs" style="left:962px;top:117px;width:13px;height:542px;background:linear-gradient(90deg,#9bbdea 0,#9bbdea 50%,#92b3e0 55%,#92b3e0 100%);border-bottom:1px solid #5f7391"></div><svg class="abs" style="left:961px;top:103px" width="15" height="723" viewBox="0 0 15 723"><path d="M0.5 14.500 V4 Q0.5 0.5 4 0.5 H11 Q14.500 0.5 14.500 4 V14.500 Z" fill="#fdfdfd" stroke="#5a5a5a"/><path d="M3.700 10 L7.500 5.500 L11.300 10 Z" fill="#4e596b"/><path d="M5 282.500 h5.500 M5 285.500 h5.500 M5 288.500 h5.500" stroke="#555" stroke-width="1"/><path d="M0.5 708.500 V719 Q0.5 722.500 4 722.500 H11 Q14.500 722.500 14.500 719 V708.500 Z" fill="#fdfdfd" stroke="#5a5a5a"/><path d="M4 714 L7.500 718.500 L11 714 Z" fill="#000"/></svg>
</div>
</body></html>
